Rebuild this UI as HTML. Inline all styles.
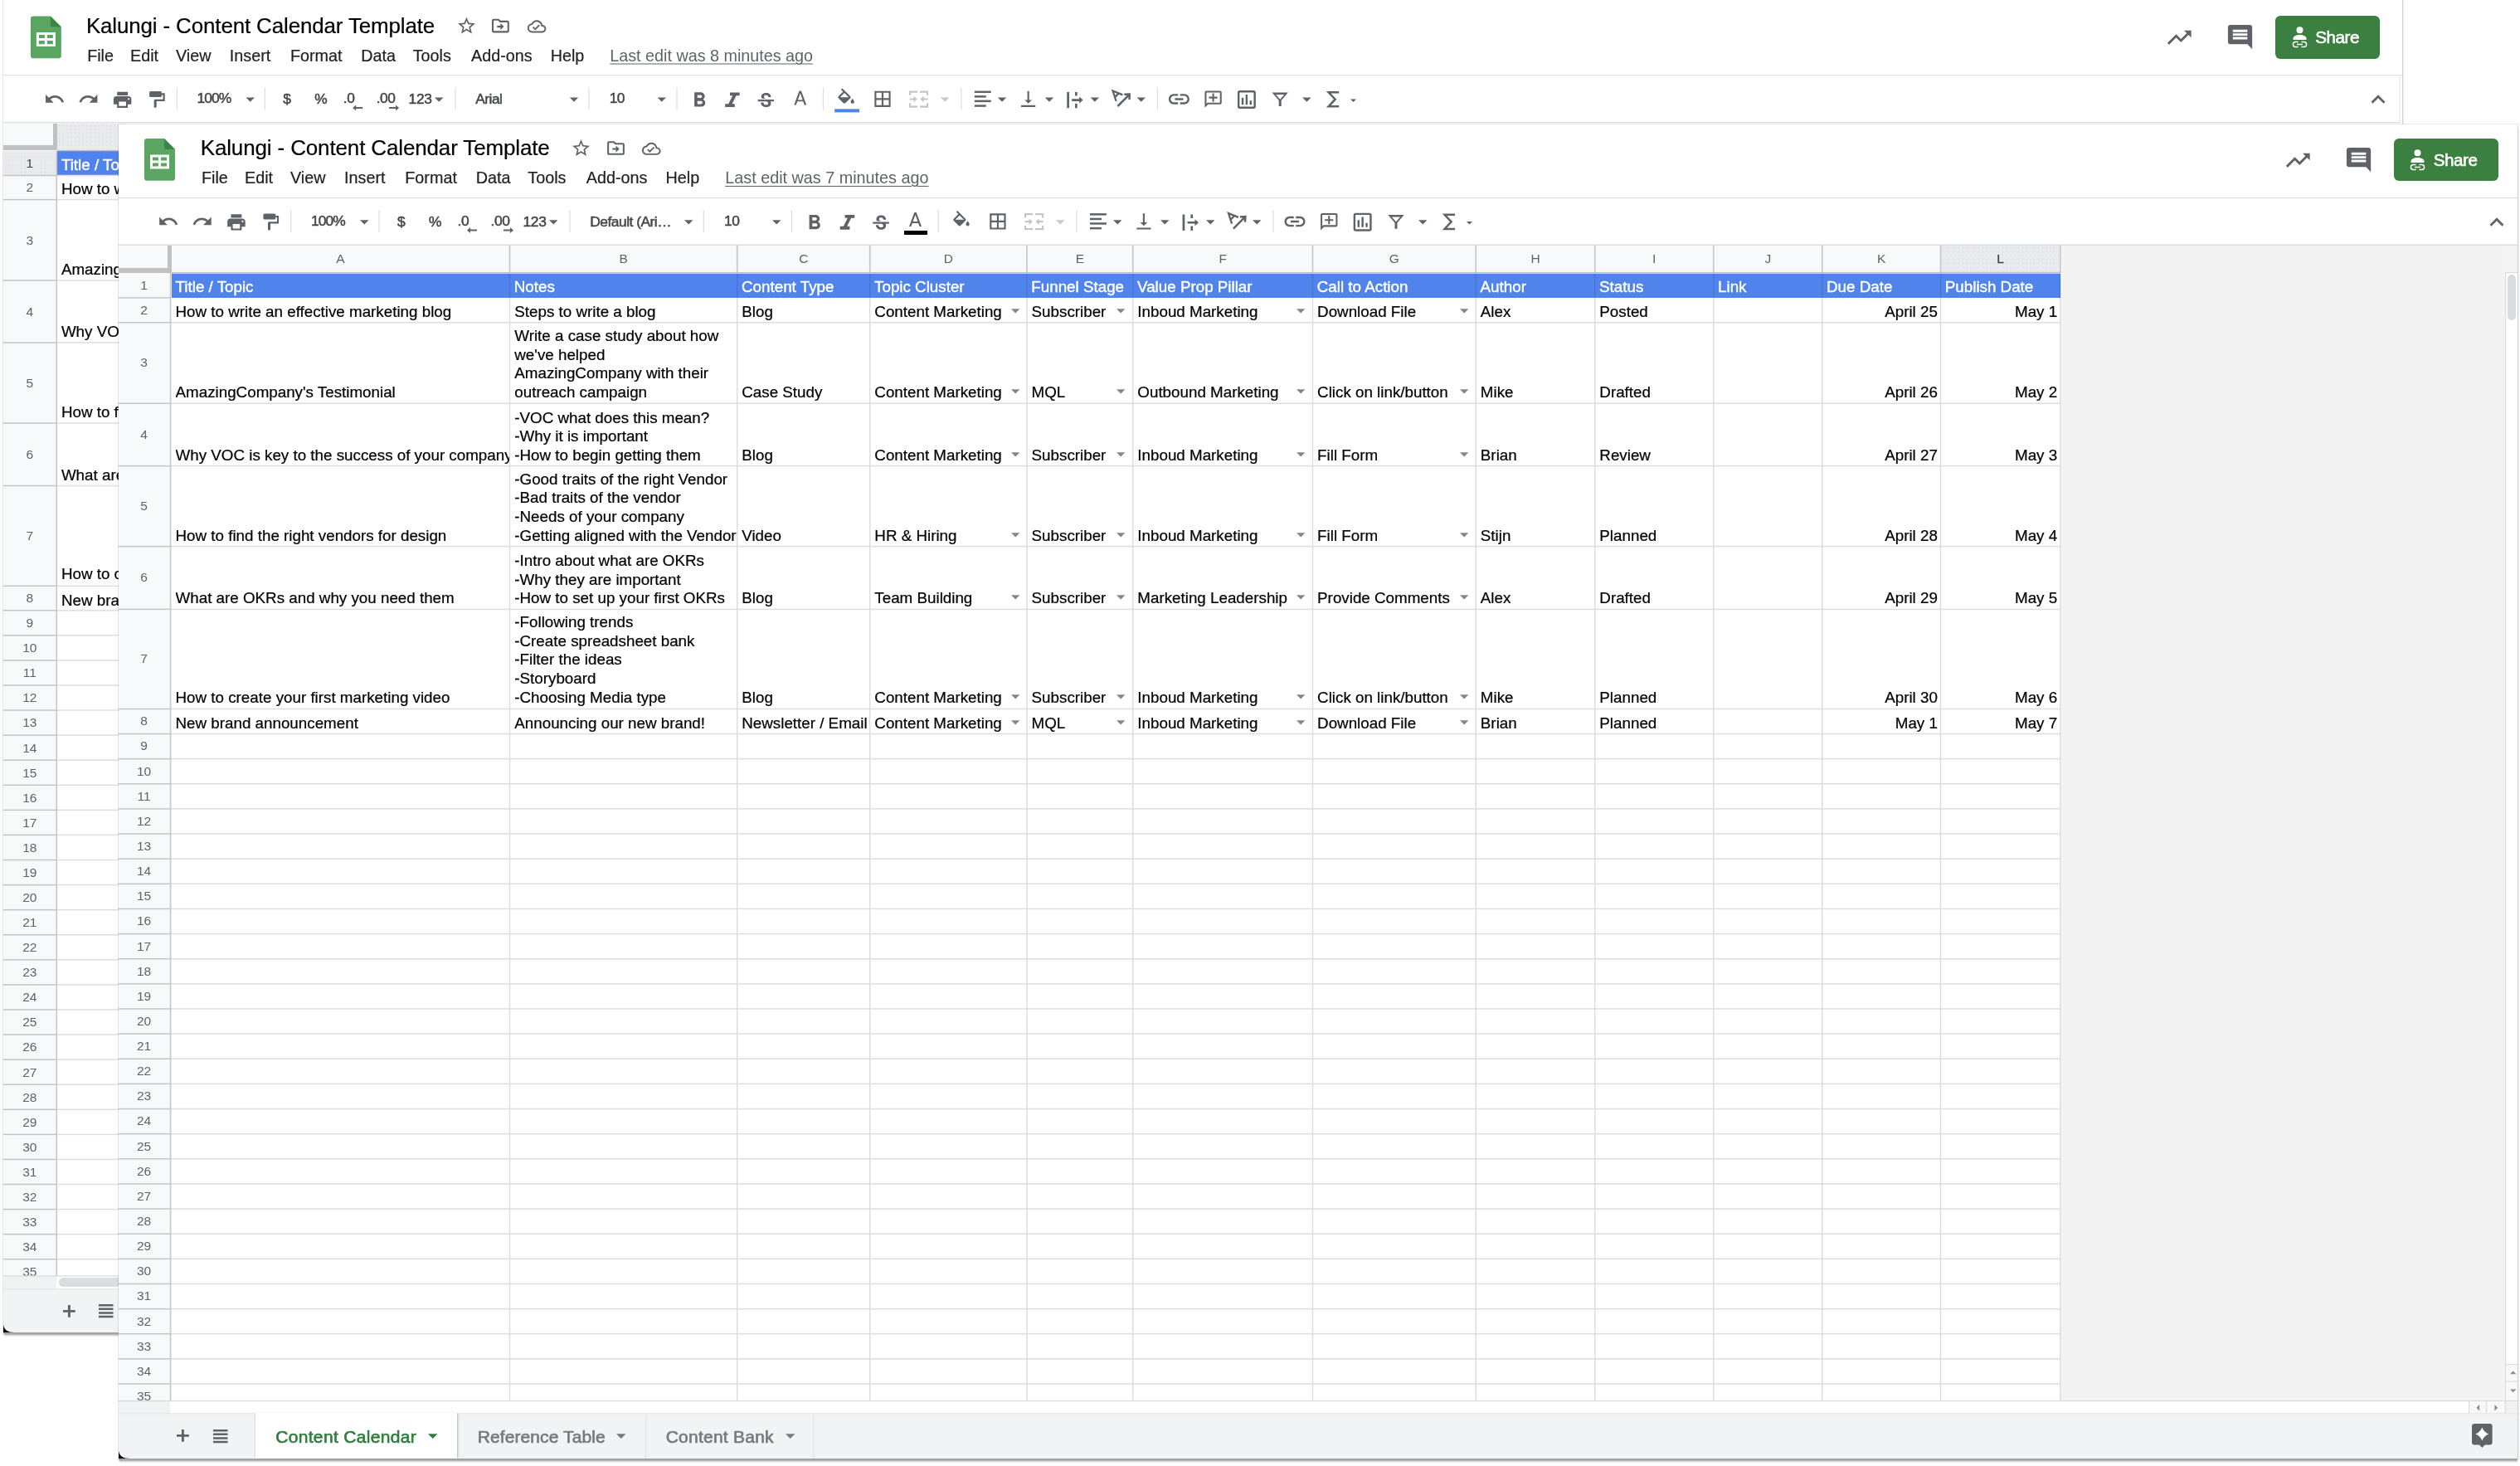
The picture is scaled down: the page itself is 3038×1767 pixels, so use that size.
<!DOCTYPE html>
<html lang="en"><head><meta charset="utf-8"><title>Kalungi - Content Calendar Template - Google Sheets</title>
<style>
html,body{margin:0;padding:0;background:#fff}
body{width:3038px;height:1767px;position:relative;overflow:hidden;font-family:"Liberation Sans",Arial,sans-serif}
#root{position:absolute;left:0;top:0;width:3038px;height:1767px;overflow:hidden;will-change:transform}
.b,.t,.i,.win,.share,.xf{position:absolute}
.xf{left:0;top:0;width:3038px;height:400px;transform-origin:0 0}
.i{display:block;overflow:visible}
.win{background:#fff;box-shadow:0 2.8px 0 -0.3px #a3a3a3, 0 4.5px 2px -0.5px rgba(0,0,0,.22), 0 0 0 0.8px rgba(0,0,0,.09), 1px 1px 3px rgba(0,0,0,.10)}
.t{white-space:pre;line-height:1;color:#000}
.c{text-align:center}
.title{color:#000;-webkit-text-stroke:0.2px #000}
.menu{color:#202124;-webkit-text-stroke:0.2px #202124}
.lastedit{color:#5f6368;text-decoration:underline;text-decoration-thickness:1.4px;text-underline-offset:3px}
.tb{color:#444746;-webkit-text-stroke:0.5px #444746}
.rh{color:#5f6368}
.cell{color:#000;-webkit-text-stroke:0.22px #000}
.wh{color:#fff;-webkit-text-stroke:0.4px #fff}
.share{background:#3c8041;border-radius:6px}
.sharetxt{color:#fff;-webkit-text-stroke:0.6px #fff;letter-spacing:-0.45px}
.tab{color:#777a7d;-webkit-text-stroke:0.65px #777a7d}
.tab.act{color:#2e7d3e;-webkit-text-stroke:0.65px #2e7d3e}
</style></head>
<body>
<div id="root">
<div class="win" style="left:3.75px;top:-10px;width:2892.5px;height:1616.25px"></div>
<div class="xf" style="transform:translate(-136.78px,-147.1px) scale(0.9982)">
<svg class="i" style="left:173.5px;top:166.6px" width="37" height="50.8" viewBox="0 0 37 50.8"><path fill="#5ba563" d="M3.4 0H24L37 13V47.4a3.4 3.4 0 0 1-3.4 3.4H3.4A3.4 3.4 0 0 1 0 47.4V3.4A3.4 3.4 0 0 1 3.4 0z"/><path fill="#3d8546" d="M24 0L37 13H26.4A2.4 2.4 0 0 1 24 10.6z"/><path fill="#fff" fill-rule="evenodd" d="M7 19.5H30V36.5H7zM10 22.4V26.4H17V22.4zM20 22.4V26.4H27V22.4zM10 29.4V33.6H17V29.4zM20 29.4V33.6H27V29.4z"/></svg>
<span class="t title" style="left:241.1px;top:165px;font-size:26px;letter-spacing:-0.14px">Kalungi - Content Calendar Template</span>
<svg class="i" style="left:687.65px;top:166.4px" width="25" height="25" viewBox="0 0 24 24"><path fill="#5f6368" d="M22 9.24l-7.19-.62L12 2 9.19 8.63 2 9.24l5.46 4.73L5.82 21 12 17.27 18.18 21l-1.63-7.03L22 9.24zM12 15.4l-3.76 2.27 1-4.28-3.32-2.88 4.38-.38L12 6.1l1.71 4.04 4.38.38-3.32 2.88 1 4.28L12 15.4z"/></svg>
<svg class="i" style="left:729.4px;top:166.4px" width="25" height="25" viewBox="0 0 24 24"><path fill="#5f6368" d="M20 6h-8l-2-2H4c-1.1 0-2 .9-2 2v12c0 1.1.9 2 2 2h16c1.1 0 2-.9 2-2V8c0-1.1-.9-2-2-2zm0 12H4V6h5.17l2 2H20v10zm-8-1l4-4-4-4v3H8v2h4v3z"/></svg>
<svg class="i" style="left:773.85px;top:167.7px" width="22.6" height="22.6" viewBox="0 0 24 24"><path fill="#5f6368" d="M19.35 10.04C18.67 6.59 15.64 4 12 4 9.11 4 6.6 5.64 5.35 8.04 2.34 8.36 0 10.91 0 14c0 3.31 2.69 6 6 6h13c2.76 0 5-2.24 5-5 0-2.64-2.05-4.78-4.65-4.96zM19 18H6c-2.21 0-4-1.79-4-4 0-2.05 1.53-3.76 3.56-3.97l1.07-.11.5-.95C8.08 7.14 9.94 6 12 6c2.62 0 4.88 1.86 5.39 4.43l.3 1.5 1.53.11c1.56.1 2.78 1.41 2.78 2.96 0 1.65-1.35 3-3 3zm-9-3.82l-2.09-2.09L6.5 13.5 10 17l6.01-6.01-1.41-1.41z"/></svg>
<span class="t menu" style="left:242.4px;top:205px;font-size:19.8px;">File</span>
<span class="t menu" style="left:294.4px;top:205px;font-size:19.8px;">Edit</span>
<span class="t menu" style="left:349.4px;top:205px;font-size:19.8px;">View</span>
<span class="t menu" style="left:414.4px;top:205px;font-size:19.8px;">Insert</span>
<span class="t menu" style="left:487.65px;top:205px;font-size:19.8px;">Format</span>
<span class="t menu" style="left:573.15px;top:205px;font-size:19.8px;">Data</span>
<span class="t menu" style="left:635.65px;top:205px;font-size:19.8px;">Tools</span>
<span class="t menu" style="left:706.15px;top:205px;font-size:19.8px;">Add-ons</span>
<span class="t menu" style="left:801.9px;top:205px;font-size:19.8px;">Help</span>
<span class="t lastedit" style="left:873.65px;top:205px;font-size:19.8px;">Last edit was 8 minutes ago</span>
<svg class="i" style="left:190.08px;top:254.08px" width="25.84" height="25.84" viewBox="0 0 24 24"><path fill="#5f6368" d="M12.5 8c-2.65 0-5.05.99-6.9 2.6L2 7v9h9l-3.62-3.62c1.39-1.16 3.16-1.88 5.12-1.88 3.54 0 6.55 2.31 7.6 5.5l2.37-.78C21.08 11.03 17.15 8 12.5 8z"/></svg>
<svg class="i" style="left:231.08px;top:254.08px" width="25.84" height="25.84" viewBox="0 0 24 24"><path fill="#5f6368" d="M18.4 10.6C16.55 8.99 14.15 8 11.5 8c-4.65 0-8.58 3.03-9.96 7.22L3.9 16c1.05-3.19 4.05-5.5 7.6-5.5 1.95 0 3.73.72 5.12 1.88L13 16h9V7l-3.6 3.6z"/></svg>
<svg class="i" style="left:272.08px;top:255.08px" width="25.84" height="25.84" viewBox="0 0 24 24"><path fill="#5f6368" d="M19 8H5c-1.66 0-3 1.34-3 3v6h4v4h12v-4h4v-6c0-1.66-1.34-3-3-3zm-3 11H8v-5h8v5zm3-7c-.55 0-1-.45-1-1s.45-1 1-1 1 .45 1 1-.45 1-1 1zm-1-9H6v4h12V3z"/></svg>
<svg class="i" style="left:316.5px;top:257px" width="20" height="21" viewBox="0 0 20 21"><rect x="0.4" y="0.5" width="14.9" height="7.1" rx="1.6" fill="#5f6368"/><path d="M15.3 4H18V11.4H7.5V19" fill="none" stroke="#5f6368" stroke-width="2.2"/><rect x="6" y="11.4" width="3" height="9" rx="0.8" fill="#5f6368"/></svg>
<svg class="i" style="left:0;top:0" width="3038" height="1767"><rect x="350.15" y="253" width="1.2" height="27" fill="#dcdee1"/></svg>
<span class="t tb" style="left:375px;top:258px;font-size:17.4px;letter-spacing:-0.9px">100%</span>
<svg class="i" style="left:433.5px;top:264.75px" width="10.5" height="5.5" viewBox="0 0 10 5"><path fill="#5f6368" d="M0 0h10L5 5z"/></svg>
<svg class="i" style="left:0;top:0" width="3038" height="1767"><rect x="456.4" y="253" width="1.2" height="27" fill="#dcdee1"/></svg>
<span class="t c tb" style="left:383.75px;width:200px;top:259px;font-size:17.4px;">$</span>
<span class="t c tb" style="left:424.25px;width:200px;top:259px;font-size:17.4px;letter-spacing:-1px">%</span>
<span class="t tb" style="left:551.5px;top:258px;font-size:17.4px;letter-spacing:-0.4px">.0</span>
<svg class="i" style="left:563px;top:274.4px" width="12" height="7" viewBox="0 0 12 7"><path fill="#5f6368" d="M4 0L0 3.5 4 7V4.5h8v-2H4z"/></svg>
<span class="t tb" style="left:591.5px;top:258px;font-size:17.4px;letter-spacing:-0.4px">.00</span>
<svg class="i" style="left:606.5px;top:274.4px" width="12" height="7" viewBox="0 0 12 7"><path fill="#5f6368" d="M8 0l4 3.5L8 7V4.5H0v-2h8z"/></svg>
<span class="t tb" style="left:630.5px;top:259px;font-size:17.4px;letter-spacing:-0.35px">123</span>
<svg class="i" style="left:662.25px;top:264.75px" width="10.5" height="5.5" viewBox="0 0 10 5"><path fill="#5f6368" d="M0 0h10L5 5z"/></svg>
<svg class="i" style="left:0;top:0" width="3038" height="1767"><rect x="686.4" y="253" width="1.2" height="27" fill="#dcdee1"/></svg>
<span class="t tb" style="left:711.25px;top:259px;font-size:17.4px;letter-spacing:-0.5px">Arial</span>
<svg class="i" style="left:824.75px;top:264.75px" width="10.5" height="5.5" viewBox="0 0 10 5"><path fill="#5f6368" d="M0 0h10L5 5z"/></svg>
<svg class="i" style="left:0;top:0" width="3038" height="1767"><rect x="847.65" y="253" width="1.2" height="27" fill="#dcdee1"/></svg>
<span class="t tb" style="left:873px;top:258px;font-size:17.4px;letter-spacing:-0.5px">10</span>
<svg class="i" style="left:931px;top:264.75px" width="10.5" height="5.5" viewBox="0 0 10 5"><path fill="#5f6368" d="M0 0h10L5 5z"/></svg>
<svg class="i" style="left:0;top:0" width="3038" height="1767"><rect x="953.9" y="253" width="1.2" height="27" fill="#dcdee1"/></svg>
<svg class="i" style="left:966.85px;top:253.95px" width="29.5" height="29.5" viewBox="0 0 24 24"><path fill="#5f6368" d="M15.6 10.79c.97-.67 1.65-1.77 1.65-2.79 0-2.26-1.75-4-4-4H7v14h7.04c2.09 0 3.71-1.7 3.71-3.79 0-1.52-.86-2.82-2.15-3.42zM10 6.5h3c.83 0 1.5.67 1.5 1.5s-.67 1.5-1.5 1.5h-3v-3zm3.5 9H10v-3h3.5c.83 0 1.5.67 1.5 1.5s-.67 1.5-1.5 1.5z"/></svg>
<svg class="i" style="left:1004.48px;top:253.9px" width="35.03" height="30.2" viewBox="0 0 24 24" preserveAspectRatio="none"><path fill="#5f6368" d="M10 4v3h2.21l-3.42 8H6v3h8v-3h-2.21l3.42-8H18V4z"/></svg>
<svg class="i" style="left:1048.98px;top:255.95px" width="26.04" height="27.7" viewBox="0 0 24 24" preserveAspectRatio="none"><path fill="#5f6368" d="M7.24 8.75c-.26-.48-.39-1.03-.39-1.67 0-.61.13-1.16.4-1.67.26-.5.63-.93 1.11-1.29.48-.35 1.05-.63 1.7-.83.66-.19 1.39-.29 2.18-.29.81 0 1.54.11 2.21.34.66.22 1.23.54 1.69.94.47.4.83.88 1.08 1.43.25.55.38 1.15.38 1.81h-3.01c0-.31-.05-.59-.15-.85-.09-.27-.24-.49-.44-.68-.2-.19-.45-.33-.75-.44-.3-.1-.66-.16-1.06-.16-.39 0-.74.04-1.03.13-.29.09-.53.21-.72.36-.19.16-.34.34-.44.55-.1.21-.15.43-.15.66 0 .48.25.88.74 1.21.38.25.77.48 1.41.7H7.39c-.05-.08-.11-.17-.15-.25zM21 12v-2H3v2h9.62c.18.07.4.14.55.2.37.17.66.34.87.51.21.17.35.36.43.57.07.2.11.43.11.69 0 .23-.05.45-.14.66-.09.2-.23.38-.42.53-.19.15-.42.26-.71.35-.29.08-.63.13-1.01.13-.43 0-.83-.04-1.18-.13s-.66-.23-.91-.42c-.25-.19-.45-.44-.59-.75-.14-.31-.25-.76-.25-1.21H6.4c0 .55.08 1.13.24 1.58.16.45.37.85.65 1.21.28.35.6.66.98.92.37.26.78.48 1.22.65.44.17.9.3 1.38.39.48.08.96.13 1.44.13.8 0 1.53-.09 2.18-.28s1.21-.45 1.67-.79c.46-.34.82-.77 1.07-1.27s.38-1.07.38-1.71c0-.6-.1-1.14-.31-1.61-.05-.11-.11-.23-.17-.33H21z"/></svg>
<svg class="i" style="left:1096px;top:256.9px" width="15" height="17" viewBox="0 0 14.25 17.5" preserveAspectRatio="none"><path fill="#5f6368" fill-rule="evenodd" d="M0 17.5L6 0H8.25L14.25 17.5H11.9L10.5 13.3H3.75L2.35 17.5zM4.4 11.3H9.85L7.125 3z"/></svg>
<svg class="i" style="left:0;top:0" width="3038" height="1767"><rect x="1130.65" y="253" width="1.2" height="27" fill="#dcdee1"/></svg>
<svg class="i" style="left:1145.9px;top:253.8px" width="26" height="26" viewBox="0 0 24 24"><path fill="#5f6368" d="M16.56 8.94L7.62 0 6.21 1.41l2.38 2.38-5.15 5.15c-.59.59-.59 1.54 0 2.12l5.5 5.5c.29.29.68.44 1.06.44s.77-.15 1.06-.44l5.5-5.5c.59-.58.59-1.53 0-2.12zM5.21 10L10 5.21 14.79 10H5.21zM19 11.5s-2 2.17-2 3.5c0 1.1.9 2 2 2s2-.9 2-2c0-1.33-2-3.5-2-3.5z"/></svg>
<div class="b" style="left:1144.5px;top:278.75px;width:30px;height:4.5px;background:#4a86e8;"></div>
<svg class="i" style="left:1189.83px;top:254.08px" width="25.84" height="25.84" viewBox="0 0 24 24"><path fill="#5f6368" d="M3 3v18h18V3H3zm8 16H5v-6h6v6zm0-8H5V5h6v6zm8 8h-6v-6h6v6zm0-8h-6V5h6v6z"/></svg>
<svg class="i" style="left:1234.5px;top:257.1px" width="23.2" height="20.3" viewBox="0 0 23.2 20.3"><g fill="#c3c5c8"><path d="M0 0H10.1V2.3H2.1V5.4H0zM23.2 0H13.1V2.3H21.1V5.4H23.2zM0 20.3H10.1V18H2.1V14.9H0zM23.2 20.3H13.1V18H21.1V14.9H23.2z"/><path d="M0.6 9.1H5.6V6.4L9.8 10.15L5.6 13.9V11.2H0.6zM22.6 9.1H17.6V6.4L13.4 10.15L17.6 13.9V11.2H22.6z"/></g></svg>
<svg class="i" style="left:1273px;top:264.75px" width="10.5" height="5.5" viewBox="0 0 10 5"><path fill="#c6c8ca" d="M0 0h10L5 5z"/></svg>
<svg class="i" style="left:0;top:0" width="3038" height="1767"><rect x="1297.4" y="253" width="1.2" height="27" fill="#dcdee1"/></svg>
<svg class="i" style="left:1314px;top:257px" width="20" height="20" viewBox="0 0 20 20"><g fill="#5f6368"><rect x="0" y="0.1" width="19.9" height="2.5"/><rect x="0" y="5.7" width="13.9" height="2.5"/><rect x="0" y="11.2" width="19.9" height="2.5"/><rect x="0" y="16.9" width="13.9" height="2.5"/></g></svg>
<svg class="i" style="left:1341.5px;top:264.75px" width="10.5" height="5.5" viewBox="0 0 10 5"><path fill="#5f6368" d="M0 0h10L5 5z"/></svg>
<svg class="i" style="left:1366.08px;top:254.08px" width="25.84" height="25.84" viewBox="0 0 24 24"><path fill="#5f6368" d="M16 13h-3V3h-2v10H8l4 4 4-4zM4 19v2h16v-2H4z"/></svg>
<svg class="i" style="left:1398.5px;top:264.75px" width="10.5" height="5.5" viewBox="0 0 10 5"><path fill="#5f6368" d="M0 0h10L5 5z"/></svg>
<svg class="i" style="left:1425px;top:257.5px" width="21" height="21" viewBox="0 0 21 21"><g fill="#5f6368"><rect x="0.6" y="0.5" width="2.7" height="19.4"/><rect x="10.4" y="0.5" width="2.7" height="4.5"/><rect x="10.4" y="14.5" width="2.7" height="5.4"/><path d="M6.5 8.9H15.5V6.2L20 10.2L15.5 14.3V11.5H6.5z"/></g></svg>
<svg class="i" style="left:1454px;top:264.75px" width="10.5" height="5.5" viewBox="0 0 10 5"><path fill="#5f6368" d="M0 0h10L5 5z"/></svg>
<svg class="i" style="left:1479px;top:255px" width="25" height="24" viewBox="0 0 25 24"><g fill="none" stroke="#5f6368" stroke-width="2.3" stroke-linejoin="miter"><path d="M6.1 14.6L2 2.1L13.9 6.9M4.5 9.7L9.2 5"/><path d="M7.9 20.6L21.6 6.9M15.8 6.4L22.3 6.1L22 12.6" stroke-width="2.5"/></g></svg>
<svg class="i" style="left:1509.75px;top:264.75px" width="10.5" height="5.5" viewBox="0 0 10 5"><path fill="#5f6368" d="M0 0h10L5 5z"/></svg>
<svg class="i" style="left:0;top:0" width="3038" height="1767"><rect x="1534.4" y="253" width="1.2" height="27" fill="#dcdee1"/></svg>
<svg class="i" style="left:1546.25px;top:252.2px" width="30" height="30" viewBox="0 0 24 24"><path fill="#5f6368" d="M3.9 12c0-1.71 1.39-3.1 3.1-3.1h4V7H7c-2.76 0-5 2.24-5 5s2.24 5 5 5h4v-1.9H7c-1.71 0-3.1-1.39-3.1-3.1zM8 13h8v-2H8v2zm9-6h-4v1.9h4c1.71 0 3.1 1.39 3.1 3.1s-1.39 3.1-3.1 3.1h-4V17h4c2.76 0 5-2.24 5-5s-2.24-5-5-5z"/></svg>
<svg class="i" style="left:1589.5px;top:255.45px" width="24.5" height="24.5" viewBox="0 0 24 24"><path fill="#5f6368" d="M20 2H4c-1.1 0-2 .9-2 2v18l4-4h14c1.1 0 2-.9 2-2V4c0-1.1-.9-2-2-2zm0 14H5.17L4 17.17V4h16v12zM11 5h2v4h4v2h-4v4h-2v-4H7V9h4z"/></svg>
<svg class="i" style="left:1627.6px;top:252.85px" width="29.3" height="29.3" viewBox="0 0 24 24"><path fill="#5f6368" d="M9 17H7v-7h2v7zm4 0h-2V7h2v10zm4 0h-2v-4h2v4zm2 2H5V5h14v14zm0-16H5c-1.1 0-2 .9-2 2v14c0 1.1.9 2 2 2h14c1.1 0 2-.9 2-2V5c0-1.1-.9-2-2-2z"/></svg>
<svg class="i" style="left:1673.4px;top:258.9px" width="20" height="17" viewBox="0 0 20 17"><path fill="#5f6368" fill-rule="evenodd" d="M0.3 0H19.7L11.5 9.6V16.7H8.5V9.6zM4.9 2.5H15.1L10 8.3z"/></svg>
<svg class="i" style="left:1709.75px;top:264.75px" width="10.5" height="5.5" viewBox="0 0 10 5"><path fill="#5f6368" d="M0 0h10L5 5z"/></svg>
<svg class="i" style="left:1739.3px;top:256.6px" width="16" height="21" viewBox="0 0 16 21"><path d="M15.1 1.8H2.6L10.6 10.3L2.6 18.9H15.1" fill="none" stroke="#5f6368" stroke-width="2.5" stroke-linejoin="miter"/></svg>
<svg class="i" style="left:1768.25px;top:267.2px" width="7" height="3.6" viewBox="0 0 10 5"><path fill="#5f6368" d="M0 0h10L5 5z"/></svg>
</div>
<svg class="i" style="left:0;top:0" width="3038" height="1767"><rect x="3.75" y="90.15" width="2892.5" height="1.2" fill="#dcdee1"/></svg>
<svg class="i" style="left:2610.35px;top:27.8px" width="34.5" height="34.5" viewBox="0 0 24 24"><path fill="#5f6368" d="M16 6l2.29 2.29-4.88 4.88-4-4L2 16.59 3.41 18l6-6 4 4 6.3-6.29L22 12V6z"/></svg>
<svg class="i" style="left:2683.35px;top:27.45px" width="35.1" height="35.1" viewBox="0 0 24 24"><path fill="#5f6368" d="M21.99 4c0-1.1-.89-2-1.99-2H4c-1.1 0-2 .9-2 2v12c0 1.1.9 2 2 2h14l4 4-.01-18zM18 14H6v-2h12v2zm0-3H6V9h12v2zm0-3H6V6h12v2z"/></svg>
<div class="share" style="left:2743.25px;top:19.25px;width:126px;height:51.4px"></div>
<svg class="i" style="left:2761.95px;top:32.25px" width="21" height="26" viewBox="0 0 21 26"><circle cx="10.5" cy="4.2" r="4" fill="#fff"/><path fill="#fff" d="M10.5 10c-4 0-8 1.6-8 4.4V16h16v-1.6c0-2.8-4-4.4-8-4.4z"/><g fill="none" stroke="#fff" stroke-width="1.5"><path d="M8.6 18.4H5.4a3 3 0 0 0 0 6h3.2M12.4 18.4h3.2a3 3 0 0 1 0 6h-3.2M7 21.4h7"/></g></svg>
<span class="t sharetxt" style="left:2791.25px;top:35px;font-size:20.6px;">Share</span>
<svg class="i" style="left:2850px;top:103.3px" width="34" height="34" viewBox="0 0 24 24"><path fill="#5f6368" d="M12 8l-6 6 1.41 1.41L12 10.83l4.59 4.58L18 14z"/></svg>
<svg class="i" style="left:0;top:0" width="3038" height="1767"><rect x="3.75" y="147.1" width="2889.5" height="1.3" fill="#d9dbde"/><rect x="2892.45" y="92" width="1.2" height="56" fill="#e4e5e7"/></svg>
<div class="b" style="left:3.75px;top:148.5px;width:65.25px;height:1389.5px;background:#f8f9fa;"></div>
<div class="b" style="left:69px;top:148.5px;width:81px;height:33px;background:#eaebed;background-image:radial-gradient(rgba(110,150,240,.33) 0.5px,transparent 0.8px);background-size:4.8px 4.8px"></div>
<div class="b" style="left:3.75px;top:175px;width:65.25px;height:6.25px;background:#c1c1c1;"></div>
<div class="b" style="left:64.4px;top:148.5px;width:4.5px;height:32.75px;background:#c1c1c1;"></div>
<div class="b" style="left:3.75px;top:182px;width:64.25px;height:29.5px;background:#eaebed;background-image:radial-gradient(rgba(110,150,240,.33) 0.5px,transparent 0.8px);background-size:4.8px 4.8px"></div>
<div class="b" style="left:69px;top:182.25px;width:81px;height:29.25px;background:#5183ec;"></div>
<svg class="i" style="left:0;top:0" width="3038" height="1767"><rect x="69" y="181" width="81" height="1.2" fill="#bdbfc3"/><rect x="3.75" y="210.78" width="64.25" height="1.45" fill="#c2c4c7"/><rect x="69" y="210.75" width="81" height="1.5" fill="#dedede"/></svg>
<span class="t c rh" style="left:3.75px;width:64px;top:189px;font-size:15.5px;color:#3c4043;">1</span>
<svg class="i" style="left:0;top:0" width="3038" height="1767"><rect x="3.75" y="239.88" width="64.25" height="1.45" fill="#c2c4c7"/><rect x="69" y="239.85" width="81" height="1.5" fill="#dedede"/></svg>
<span class="t c rh" style="left:3.75px;width:64px;top:218px;font-size:15.5px;">2</span>
<svg class="i" style="left:0;top:0" width="3038" height="1767"><rect x="3.75" y="337.27" width="64.25" height="1.45" fill="#c2c4c7"/><rect x="69" y="337.25" width="81" height="1.5" fill="#dedede"/></svg>
<span class="t c rh" style="left:3.75px;width:64px;top:282px;font-size:15.5px;">3</span>
<svg class="i" style="left:0;top:0" width="3038" height="1767"><rect x="3.75" y="412.27" width="64.25" height="1.45" fill="#c2c4c7"/><rect x="69" y="412.25" width="81" height="1.5" fill="#dedede"/></svg>
<span class="t c rh" style="left:3.75px;width:64px;top:368px;font-size:15.5px;">4</span>
<svg class="i" style="left:0;top:0" width="3038" height="1767"><rect x="3.75" y="509.27" width="64.25" height="1.45" fill="#c2c4c7"/><rect x="69" y="509.25" width="81" height="1.5" fill="#dedede"/></svg>
<span class="t c rh" style="left:3.75px;width:64px;top:454px;font-size:15.5px;">5</span>
<svg class="i" style="left:0;top:0" width="3038" height="1767"><rect x="3.75" y="584.77" width="64.25" height="1.45" fill="#c2c4c7"/><rect x="69" y="584.75" width="81" height="1.5" fill="#dedede"/></svg>
<span class="t c rh" style="left:3.75px;width:64px;top:540px;font-size:15.5px;">6</span>
<svg class="i" style="left:0;top:0" width="3038" height="1767"><rect x="3.75" y="705.52" width="64.25" height="1.45" fill="#c2c4c7"/><rect x="69" y="705.5" width="81" height="1.5" fill="#dedede"/></svg>
<span class="t c rh" style="left:3.75px;width:64px;top:638px;font-size:15.5px;">7</span>
<svg class="i" style="left:0;top:0" width="3038" height="1767"><rect x="3.75" y="735.02" width="64.25" height="1.45" fill="#c2c4c7"/><rect x="69" y="735" width="81" height="1.5" fill="#dedede"/></svg>
<span class="t c rh" style="left:3.75px;width:64px;top:713px;font-size:15.5px;">8</span>
<svg class="i" style="left:0;top:0" width="3038" height="1767"><rect x="3.75" y="765.1" width="64.25" height="1.45" fill="#c2c4c7"/><rect x="69" y="765.08" width="81" height="1.5" fill="#dedede"/></svg>
<span class="t c rh" style="left:3.75px;width:64px;top:743px;font-size:15.5px;">9</span>
<svg class="i" style="left:0;top:0" width="3038" height="1767"><rect x="3.75" y="795.18" width="64.25" height="1.45" fill="#c2c4c7"/><rect x="69" y="795.15" width="81" height="1.5" fill="#dedede"/></svg>
<span class="t c rh" style="left:3.75px;width:64px;top:773px;font-size:15.5px;">10</span>
<svg class="i" style="left:0;top:0" width="3038" height="1767"><rect x="3.75" y="825.26" width="64.25" height="1.45" fill="#c2c4c7"/><rect x="69" y="825.23" width="81" height="1.5" fill="#dedede"/></svg>
<span class="t c rh" style="left:3.75px;width:64px;top:803px;font-size:15.5px;">11</span>
<svg class="i" style="left:0;top:0" width="3038" height="1767"><rect x="3.75" y="855.33" width="64.25" height="1.45" fill="#c2c4c7"/><rect x="69" y="855.31" width="81" height="1.5" fill="#dedede"/></svg>
<span class="t c rh" style="left:3.75px;width:64px;top:833px;font-size:15.5px;">12</span>
<svg class="i" style="left:0;top:0" width="3038" height="1767"><rect x="3.75" y="885.41" width="64.25" height="1.45" fill="#c2c4c7"/><rect x="69" y="885.38" width="81" height="1.5" fill="#dedede"/></svg>
<span class="t c rh" style="left:3.75px;width:64px;top:863px;font-size:15.5px;">13</span>
<svg class="i" style="left:0;top:0" width="3038" height="1767"><rect x="3.75" y="915.49" width="64.25" height="1.45" fill="#c2c4c7"/><rect x="69" y="915.46" width="81" height="1.5" fill="#dedede"/></svg>
<span class="t c rh" style="left:3.75px;width:64px;top:894px;font-size:15.5px;">14</span>
<svg class="i" style="left:0;top:0" width="3038" height="1767"><rect x="3.75" y="945.56" width="64.25" height="1.45" fill="#c2c4c7"/><rect x="69" y="945.54" width="81" height="1.5" fill="#dedede"/></svg>
<span class="t c rh" style="left:3.75px;width:64px;top:924px;font-size:15.5px;">15</span>
<svg class="i" style="left:0;top:0" width="3038" height="1767"><rect x="3.75" y="975.64" width="64.25" height="1.45" fill="#c2c4c7"/><rect x="69" y="975.62" width="81" height="1.5" fill="#dedede"/></svg>
<span class="t c rh" style="left:3.75px;width:64px;top:954px;font-size:15.5px;">16</span>
<svg class="i" style="left:0;top:0" width="3038" height="1767"><rect x="3.75" y="1005.72" width="64.25" height="1.45" fill="#c2c4c7"/><rect x="69" y="1005.69" width="81" height="1.5" fill="#dedede"/></svg>
<span class="t c rh" style="left:3.75px;width:64px;top:984px;font-size:15.5px;">17</span>
<svg class="i" style="left:0;top:0" width="3038" height="1767"><rect x="3.75" y="1035.8" width="64.25" height="1.45" fill="#c2c4c7"/><rect x="69" y="1035.77" width="81" height="1.5" fill="#dedede"/></svg>
<span class="t c rh" style="left:3.75px;width:64px;top:1014px;font-size:15.5px;">18</span>
<svg class="i" style="left:0;top:0" width="3038" height="1767"><rect x="3.75" y="1065.87" width="64.25" height="1.45" fill="#c2c4c7"/><rect x="69" y="1065.85" width="81" height="1.5" fill="#dedede"/></svg>
<span class="t c rh" style="left:3.75px;width:64px;top:1044px;font-size:15.5px;">19</span>
<svg class="i" style="left:0;top:0" width="3038" height="1767"><rect x="3.75" y="1095.95" width="64.25" height="1.45" fill="#c2c4c7"/><rect x="69" y="1095.92" width="81" height="1.5" fill="#dedede"/></svg>
<span class="t c rh" style="left:3.75px;width:64px;top:1074px;font-size:15.5px;">20</span>
<svg class="i" style="left:0;top:0" width="3038" height="1767"><rect x="3.75" y="1126.03" width="64.25" height="1.45" fill="#c2c4c7"/><rect x="69" y="1126" width="81" height="1.5" fill="#dedede"/></svg>
<span class="t c rh" style="left:3.75px;width:64px;top:1104px;font-size:15.5px;">21</span>
<svg class="i" style="left:0;top:0" width="3038" height="1767"><rect x="3.75" y="1156.1" width="64.25" height="1.45" fill="#c2c4c7"/><rect x="69" y="1156.08" width="81" height="1.5" fill="#dedede"/></svg>
<span class="t c rh" style="left:3.75px;width:64px;top:1134px;font-size:15.5px;">22</span>
<svg class="i" style="left:0;top:0" width="3038" height="1767"><rect x="3.75" y="1186.18" width="64.25" height="1.45" fill="#c2c4c7"/><rect x="69" y="1186.15" width="81" height="1.5" fill="#dedede"/></svg>
<span class="t c rh" style="left:3.75px;width:64px;top:1164px;font-size:15.5px;">23</span>
<svg class="i" style="left:0;top:0" width="3038" height="1767"><rect x="3.75" y="1216.26" width="64.25" height="1.45" fill="#c2c4c7"/><rect x="69" y="1216.23" width="81" height="1.5" fill="#dedede"/></svg>
<span class="t c rh" style="left:3.75px;width:64px;top:1194px;font-size:15.5px;">24</span>
<svg class="i" style="left:0;top:0" width="3038" height="1767"><rect x="3.75" y="1246.33" width="64.25" height="1.45" fill="#c2c4c7"/><rect x="69" y="1246.31" width="81" height="1.5" fill="#dedede"/></svg>
<span class="t c rh" style="left:3.75px;width:64px;top:1224px;font-size:15.5px;">25</span>
<svg class="i" style="left:0;top:0" width="3038" height="1767"><rect x="3.75" y="1276.41" width="64.25" height="1.45" fill="#c2c4c7"/><rect x="69" y="1276.39" width="81" height="1.5" fill="#dedede"/></svg>
<span class="t c rh" style="left:3.75px;width:64px;top:1254px;font-size:15.5px;">26</span>
<svg class="i" style="left:0;top:0" width="3038" height="1767"><rect x="3.75" y="1306.49" width="64.25" height="1.45" fill="#c2c4c7"/><rect x="69" y="1306.46" width="81" height="1.5" fill="#dedede"/></svg>
<span class="t c rh" style="left:3.75px;width:64px;top:1285px;font-size:15.5px;">27</span>
<svg class="i" style="left:0;top:0" width="3038" height="1767"><rect x="3.75" y="1336.57" width="64.25" height="1.45" fill="#c2c4c7"/><rect x="69" y="1336.54" width="81" height="1.5" fill="#dedede"/></svg>
<span class="t c rh" style="left:3.75px;width:64px;top:1315px;font-size:15.5px;">28</span>
<svg class="i" style="left:0;top:0" width="3038" height="1767"><rect x="3.75" y="1366.64" width="64.25" height="1.45" fill="#c2c4c7"/><rect x="69" y="1366.62" width="81" height="1.5" fill="#dedede"/></svg>
<span class="t c rh" style="left:3.75px;width:64px;top:1345px;font-size:15.5px;">29</span>
<svg class="i" style="left:0;top:0" width="3038" height="1767"><rect x="3.75" y="1396.72" width="64.25" height="1.45" fill="#c2c4c7"/><rect x="69" y="1396.69" width="81" height="1.5" fill="#dedede"/></svg>
<span class="t c rh" style="left:3.75px;width:64px;top:1375px;font-size:15.5px;">30</span>
<svg class="i" style="left:0;top:0" width="3038" height="1767"><rect x="3.75" y="1426.8" width="64.25" height="1.45" fill="#c2c4c7"/><rect x="69" y="1426.77" width="81" height="1.5" fill="#dedede"/></svg>
<span class="t c rh" style="left:3.75px;width:64px;top:1405px;font-size:15.5px;">31</span>
<svg class="i" style="left:0;top:0" width="3038" height="1767"><rect x="3.75" y="1456.87" width="64.25" height="1.45" fill="#c2c4c7"/><rect x="69" y="1456.85" width="81" height="1.5" fill="#dedede"/></svg>
<span class="t c rh" style="left:3.75px;width:64px;top:1435px;font-size:15.5px;">32</span>
<svg class="i" style="left:0;top:0" width="3038" height="1767"><rect x="3.75" y="1486.95" width="64.25" height="1.45" fill="#c2c4c7"/><rect x="69" y="1486.93" width="81" height="1.5" fill="#dedede"/></svg>
<span class="t c rh" style="left:3.75px;width:64px;top:1465px;font-size:15.5px;">33</span>
<svg class="i" style="left:0;top:0" width="3038" height="1767"><rect x="3.75" y="1517.03" width="64.25" height="1.45" fill="#c2c4c7"/><rect x="69" y="1517" width="81" height="1.5" fill="#dedede"/></svg>
<span class="t c rh" style="left:3.75px;width:64px;top:1495px;font-size:15.5px;">34</span>
<span class="t c rh" style="left:3.75px;width:64px;top:1525px;font-size:15.5px;">35</span>
<svg class="i" style="left:0;top:0" width="3038" height="1767"><rect x="67.5" y="182" width="1.6" height="1371.5" fill="#c4c6c9"/></svg>
<span class="t cell wh" style="left:73.9px;top:190px;font-size:18.8px;">Title / Topic</span>
<span class="t cell" style="left:73.9px;top:219px;font-size:18.8px;">How to write an effective marketing blog</span>
<span class="t cell" style="left:73.9px;top:316px;font-size:18.8px;">AmazingCompany's Testimonial</span>
<span class="t cell" style="left:73.9px;top:391px;font-size:18.8px;">Why VOC is key to the success of your company</span>
<span class="t cell" style="left:73.9px;top:488px;font-size:18.8px;">How to find the right vendors for design</span>
<span class="t cell" style="left:73.9px;top:564px;font-size:18.8px;">What are OKRs and why you need them</span>
<span class="t cell" style="left:73.9px;top:683px;font-size:18.8px;">How to create your first marketing video</span>
<span class="t cell" style="left:73.9px;top:715px;font-size:18.8px;">New brand announcement</span>
<div class="b" style="left:3.75px;top:1538px;width:146.25px;height:15.75px;background:#fff;"></div>
<div class="b" style="left:3.75px;top:1538px;width:64.25px;height:15.75px;background:#f1f2f3;"></div>
<svg class="i" style="left:0;top:0" width="3038" height="1767"><rect x="3.75" y="1537.4" width="146.25" height="1.2" fill="#d9d9d9"/></svg>
<div class="b" style="left:71.25px;top:1539.75px;width:200px;height:11.5px;background:#dadce0;border-radius:6px"></div>
<div class="b" style="left:3.75px;top:1553.75px;width:146.25px;height:52.5px;background:#f1f3f4;"></div>
<svg class="i" style="left:0;top:0" width="3038" height="1767"><rect x="3.75" y="1553.15" width="146.25" height="1.2" fill="#e3e4e6"/></svg>
<svg class="i" style="left:76.35px;top:1572.6px" width="14.8" height="14.8" viewBox="0 0 14.8 14.8"><path fill="#5f6368" d="M5.95 0H8.85V5.95H14.8V8.85H8.85V14.8H5.95V8.85H0V5.95H5.95z"/></svg>
<svg class="i" style="left:119.25px;top:1572.4px" width="17.5" height="16.4" viewBox="0 0 17.5 16.4"><path fill="#5f6368" d="M0 0H17.5V2.5H0zM0 4.6H17.5V7.1H0zM0 9.2H17.5V11.7H0zM0 13.8H17.5V16.3H0z"/></svg>
<svg class="i" style="left:3.75px;top:1596.25px" width="13.5" height="10" viewBox="0 0 13.5 10"><path d="M0 0Q0.5 10 13.5 10H0z" fill="#000"/></svg>
<div class="win" style="left:142.5px;top:149.5px;width:2892.5px;height:1608.5px"></div>
<svg class="i" style="left:174.1px;top:166.6px" width="37" height="50.8" viewBox="0 0 37 50.8"><path fill="#5ba563" d="M3.4 0H24L37 13V47.4a3.4 3.4 0 0 1-3.4 3.4H3.4A3.4 3.4 0 0 1 0 47.4V3.4A3.4 3.4 0 0 1 3.4 0z"/><path fill="#3d8546" d="M24 0L37 13H26.4A2.4 2.4 0 0 1 24 10.6z"/><path fill="#fff" fill-rule="evenodd" d="M7 19.5H30V36.5H7zM10 22.4V26.4H17V22.4zM20 22.4V26.4H27V22.4zM10 29.4V33.6H17V29.4zM20 29.4V33.6H27V29.4z"/></svg>
<span class="t title" style="left:241.7px;top:165px;font-size:26px;letter-spacing:-0.14px">Kalungi - Content Calendar Template</span>
<svg class="i" style="left:688.25px;top:166.4px" width="25" height="25" viewBox="0 0 24 24"><path fill="#5f6368" d="M22 9.24l-7.19-.62L12 2 9.19 8.63 2 9.24l5.46 4.73L5.82 21 12 17.27 18.18 21l-1.63-7.03L22 9.24zM12 15.4l-3.76 2.27 1-4.28-3.32-2.88 4.38-.38L12 6.1l1.71 4.04 4.38.38-3.32 2.88 1 4.28L12 15.4z"/></svg>
<svg class="i" style="left:730px;top:166.4px" width="25" height="25" viewBox="0 0 24 24"><path fill="#5f6368" d="M20 6h-8l-2-2H4c-1.1 0-2 .9-2 2v12c0 1.1.9 2 2 2h16c1.1 0 2-.9 2-2V8c0-1.1-.9-2-2-2zm0 12H4V6h5.17l2 2H20v10zm-8-1l4-4-4-4v3H8v2h4v3z"/></svg>
<svg class="i" style="left:774.45px;top:167.7px" width="22.6" height="22.6" viewBox="0 0 24 24"><path fill="#5f6368" d="M19.35 10.04C18.67 6.59 15.64 4 12 4 9.11 4 6.6 5.64 5.35 8.04 2.34 8.36 0 10.91 0 14c0 3.31 2.69 6 6 6h13c2.76 0 5-2.24 5-5 0-2.64-2.05-4.78-4.65-4.96zM19 18H6c-2.21 0-4-1.79-4-4 0-2.05 1.53-3.76 3.56-3.97l1.07-.11.5-.95C8.08 7.14 9.94 6 12 6c2.62 0 4.88 1.86 5.39 4.43l.3 1.5 1.53.11c1.56.1 2.78 1.41 2.78 2.96 0 1.65-1.35 3-3 3zm-9-3.82l-2.09-2.09L6.5 13.5 10 17l6.01-6.01-1.41-1.41z"/></svg>
<span class="t menu" style="left:243px;top:205px;font-size:19.8px;">File</span>
<span class="t menu" style="left:295px;top:205px;font-size:19.8px;">Edit</span>
<span class="t menu" style="left:350px;top:205px;font-size:19.8px;">View</span>
<span class="t menu" style="left:415px;top:205px;font-size:19.8px;">Insert</span>
<span class="t menu" style="left:488.25px;top:205px;font-size:19.8px;">Format</span>
<span class="t menu" style="left:573.75px;top:205px;font-size:19.8px;">Data</span>
<span class="t menu" style="left:636.25px;top:205px;font-size:19.8px;">Tools</span>
<span class="t menu" style="left:706.75px;top:205px;font-size:19.8px;">Add-ons</span>
<span class="t menu" style="left:802.5px;top:205px;font-size:19.8px;">Help</span>
<span class="t lastedit" style="left:874.25px;top:205px;font-size:19.8px;">Last edit was 7 minutes ago</span>
<svg class="i" style="left:0;top:0" width="3038" height="1767"><rect x="142.5" y="238" width="2892.5" height="1.2" fill="#dcdee1"/></svg>
<svg class="i" style="left:190.08px;top:254.08px" width="25.84" height="25.84" viewBox="0 0 24 24"><path fill="#5f6368" d="M12.5 8c-2.65 0-5.05.99-6.9 2.6L2 7v9h9l-3.62-3.62c1.39-1.16 3.16-1.88 5.12-1.88 3.54 0 6.55 2.31 7.6 5.5l2.37-.78C21.08 11.03 17.15 8 12.5 8z"/></svg>
<svg class="i" style="left:231.08px;top:254.08px" width="25.84" height="25.84" viewBox="0 0 24 24"><path fill="#5f6368" d="M18.4 10.6C16.55 8.99 14.15 8 11.5 8c-4.65 0-8.58 3.03-9.96 7.22L3.9 16c1.05-3.19 4.05-5.5 7.6-5.5 1.95 0 3.73.72 5.12 1.88L13 16h9V7l-3.6 3.6z"/></svg>
<svg class="i" style="left:272.08px;top:255.08px" width="25.84" height="25.84" viewBox="0 0 24 24"><path fill="#5f6368" d="M19 8H5c-1.66 0-3 1.34-3 3v6h4v4h12v-4h4v-6c0-1.66-1.34-3-3-3zm-3 11H8v-5h8v5zm3-7c-.55 0-1-.45-1-1s.45-1 1-1 1 .45 1 1-.45 1-1 1zm-1-9H6v4h12V3z"/></svg>
<svg class="i" style="left:316.5px;top:257px" width="20" height="21" viewBox="0 0 20 21"><rect x="0.4" y="0.5" width="14.9" height="7.1" rx="1.6" fill="#5f6368"/><path d="M15.3 4H18V11.4H7.5V19" fill="none" stroke="#5f6368" stroke-width="2.2"/><rect x="6" y="11.4" width="3" height="9" rx="0.8" fill="#5f6368"/></svg>
<svg class="i" style="left:0;top:0" width="3038" height="1767"><rect x="350.15" y="253" width="1.2" height="27" fill="#dcdee1"/></svg>
<span class="t tb" style="left:375px;top:258px;font-size:17.4px;letter-spacing:-0.9px">100%</span>
<svg class="i" style="left:433.5px;top:264.75px" width="10.5" height="5.5" viewBox="0 0 10 5"><path fill="#5f6368" d="M0 0h10L5 5z"/></svg>
<svg class="i" style="left:0;top:0" width="3038" height="1767"><rect x="456.4" y="253" width="1.2" height="27" fill="#dcdee1"/></svg>
<span class="t c tb" style="left:383.75px;width:200px;top:259px;font-size:17.4px;">$</span>
<span class="t c tb" style="left:424.25px;width:200px;top:259px;font-size:17.4px;letter-spacing:-1px">%</span>
<span class="t tb" style="left:551.5px;top:258px;font-size:17.4px;letter-spacing:-0.4px">.0</span>
<svg class="i" style="left:563px;top:274.4px" width="12" height="7" viewBox="0 0 12 7"><path fill="#5f6368" d="M4 0L0 3.5 4 7V4.5h8v-2H4z"/></svg>
<span class="t tb" style="left:591.5px;top:258px;font-size:17.4px;letter-spacing:-0.4px">.00</span>
<svg class="i" style="left:606.5px;top:274.4px" width="12" height="7" viewBox="0 0 12 7"><path fill="#5f6368" d="M8 0l4 3.5L8 7V4.5H0v-2h8z"/></svg>
<span class="t tb" style="left:630.5px;top:259px;font-size:17.4px;letter-spacing:-0.35px">123</span>
<svg class="i" style="left:662.25px;top:264.75px" width="10.5" height="5.5" viewBox="0 0 10 5"><path fill="#5f6368" d="M0 0h10L5 5z"/></svg>
<svg class="i" style="left:0;top:0" width="3038" height="1767"><rect x="686.4" y="253" width="1.2" height="27" fill="#dcdee1"/></svg>
<span class="t tb" style="left:711.25px;top:259px;font-size:17.4px;letter-spacing:-0.5px">Default (Ari…</span>
<svg class="i" style="left:824.75px;top:264.75px" width="10.5" height="5.5" viewBox="0 0 10 5"><path fill="#5f6368" d="M0 0h10L5 5z"/></svg>
<svg class="i" style="left:0;top:0" width="3038" height="1767"><rect x="847.65" y="253" width="1.2" height="27" fill="#dcdee1"/></svg>
<span class="t tb" style="left:873px;top:258px;font-size:17.4px;letter-spacing:-0.5px">10</span>
<svg class="i" style="left:931px;top:264.75px" width="10.5" height="5.5" viewBox="0 0 10 5"><path fill="#5f6368" d="M0 0h10L5 5z"/></svg>
<svg class="i" style="left:0;top:0" width="3038" height="1767"><rect x="953.9" y="253" width="1.2" height="27" fill="#dcdee1"/></svg>
<svg class="i" style="left:966.85px;top:253.95px" width="29.5" height="29.5" viewBox="0 0 24 24"><path fill="#5f6368" d="M15.6 10.79c.97-.67 1.65-1.77 1.65-2.79 0-2.26-1.75-4-4-4H7v14h7.04c2.09 0 3.71-1.7 3.71-3.79 0-1.52-.86-2.82-2.15-3.42zM10 6.5h3c.83 0 1.5.67 1.5 1.5s-.67 1.5-1.5 1.5h-3v-3zm3.5 9H10v-3h3.5c.83 0 1.5.67 1.5 1.5s-.67 1.5-1.5 1.5z"/></svg>
<svg class="i" style="left:1004.48px;top:253.9px" width="35.03" height="30.2" viewBox="0 0 24 24" preserveAspectRatio="none"><path fill="#5f6368" d="M10 4v3h2.21l-3.42 8H6v3h8v-3h-2.21l3.42-8H18V4z"/></svg>
<svg class="i" style="left:1048.98px;top:255.95px" width="26.04" height="27.7" viewBox="0 0 24 24" preserveAspectRatio="none"><path fill="#5f6368" d="M7.24 8.75c-.26-.48-.39-1.03-.39-1.67 0-.61.13-1.16.4-1.67.26-.5.63-.93 1.11-1.29.48-.35 1.05-.63 1.7-.83.66-.19 1.39-.29 2.18-.29.81 0 1.54.11 2.21.34.66.22 1.23.54 1.69.94.47.4.83.88 1.08 1.43.25.55.38 1.15.38 1.81h-3.01c0-.31-.05-.59-.15-.85-.09-.27-.24-.49-.44-.68-.2-.19-.45-.33-.75-.44-.3-.1-.66-.16-1.06-.16-.39 0-.74.04-1.03.13-.29.09-.53.21-.72.36-.19.16-.34.34-.44.55-.1.21-.15.43-.15.66 0 .48.25.88.74 1.21.38.25.77.48 1.41.7H7.39c-.05-.08-.11-.17-.15-.25zM21 12v-2H3v2h9.62c.18.07.4.14.55.2.37.17.66.34.87.51.21.17.35.36.43.57.07.2.11.43.11.69 0 .23-.05.45-.14.66-.09.2-.23.38-.42.53-.19.15-.42.26-.71.35-.29.08-.63.13-1.01.13-.43 0-.83-.04-1.18-.13s-.66-.23-.91-.42c-.25-.19-.45-.44-.59-.75-.14-.31-.25-.76-.25-1.21H6.4c0 .55.08 1.13.24 1.58.16.45.37.85.65 1.21.28.35.6.66.98.92.37.26.78.48 1.22.65.44.17.9.3 1.38.39.48.08.96.13 1.44.13.8 0 1.53-.09 2.18-.28s1.21-.45 1.67-.79c.46-.34.82-.77 1.07-1.27s.38-1.07.38-1.71c0-.6-.1-1.14-.31-1.61-.05-.11-.11-.23-.17-.33H21z"/></svg>
<svg class="i" style="left:1096px;top:255.8px" width="15" height="17" viewBox="0 0 14.25 17.5" preserveAspectRatio="none"><path fill="#5f6368" fill-rule="evenodd" d="M0 17.5L6 0H8.25L14.25 17.5H11.9L10.5 13.3H3.75L2.35 17.5zM4.4 11.3H9.85L7.125 3z"/></svg>
<div class="b" style="left:1090px;top:278.25px;width:28.25px;height:5px;background:#000;"></div>
<svg class="i" style="left:0;top:0" width="3038" height="1767"><rect x="1130.65" y="253" width="1.2" height="27" fill="#dcdee1"/></svg>
<svg class="i" style="left:1145.9px;top:253.8px" width="26" height="26" viewBox="0 0 24 24"><path fill="#5f6368" d="M16.56 8.94L7.62 0 6.21 1.41l2.38 2.38-5.15 5.15c-.59.59-.59 1.54 0 2.12l5.5 5.5c.29.29.68.44 1.06.44s.77-.15 1.06-.44l5.5-5.5c.59-.58.59-1.53 0-2.12zM5.21 10L10 5.21 14.79 10H5.21zM19 11.5s-2 2.17-2 3.5c0 1.1.9 2 2 2s2-.9 2-2c0-1.33-2-3.5-2-3.5z"/></svg>
<svg class="i" style="left:1189.83px;top:254.08px" width="25.84" height="25.84" viewBox="0 0 24 24"><path fill="#5f6368" d="M3 3v18h18V3H3zm8 16H5v-6h6v6zm0-8H5V5h6v6zm8 8h-6v-6h6v6zm0-8h-6V5h6v6z"/></svg>
<svg class="i" style="left:1234.5px;top:257.1px" width="23.2" height="20.3" viewBox="0 0 23.2 20.3"><g fill="#c3c5c8"><path d="M0 0H10.1V2.3H2.1V5.4H0zM23.2 0H13.1V2.3H21.1V5.4H23.2zM0 20.3H10.1V18H2.1V14.9H0zM23.2 20.3H13.1V18H21.1V14.9H23.2z"/><path d="M0.6 9.1H5.6V6.4L9.8 10.15L5.6 13.9V11.2H0.6zM22.6 9.1H17.6V6.4L13.4 10.15L17.6 13.9V11.2H22.6z"/></g></svg>
<svg class="i" style="left:1273px;top:264.75px" width="10.5" height="5.5" viewBox="0 0 10 5"><path fill="#c6c8ca" d="M0 0h10L5 5z"/></svg>
<svg class="i" style="left:0;top:0" width="3038" height="1767"><rect x="1297.4" y="253" width="1.2" height="27" fill="#dcdee1"/></svg>
<svg class="i" style="left:1314px;top:257px" width="20" height="20" viewBox="0 0 20 20"><g fill="#5f6368"><rect x="0" y="0.1" width="19.9" height="2.5"/><rect x="0" y="5.7" width="13.9" height="2.5"/><rect x="0" y="11.2" width="19.9" height="2.5"/><rect x="0" y="16.9" width="13.9" height="2.5"/></g></svg>
<svg class="i" style="left:1341.5px;top:264.75px" width="10.5" height="5.5" viewBox="0 0 10 5"><path fill="#5f6368" d="M0 0h10L5 5z"/></svg>
<svg class="i" style="left:1366.08px;top:254.08px" width="25.84" height="25.84" viewBox="0 0 24 24"><path fill="#5f6368" d="M16 13h-3V3h-2v10H8l4 4 4-4zM4 19v2h16v-2H4z"/></svg>
<svg class="i" style="left:1398.5px;top:264.75px" width="10.5" height="5.5" viewBox="0 0 10 5"><path fill="#5f6368" d="M0 0h10L5 5z"/></svg>
<svg class="i" style="left:1425px;top:257.5px" width="21" height="21" viewBox="0 0 21 21"><g fill="#5f6368"><rect x="0.6" y="0.5" width="2.7" height="19.4"/><rect x="10.4" y="0.5" width="2.7" height="4.5"/><rect x="10.4" y="14.5" width="2.7" height="5.4"/><path d="M6.5 8.9H15.5V6.2L20 10.2L15.5 14.3V11.5H6.5z"/></g></svg>
<svg class="i" style="left:1454px;top:264.75px" width="10.5" height="5.5" viewBox="0 0 10 5"><path fill="#5f6368" d="M0 0h10L5 5z"/></svg>
<svg class="i" style="left:1479px;top:255px" width="25" height="24" viewBox="0 0 25 24"><g fill="none" stroke="#5f6368" stroke-width="2.3" stroke-linejoin="miter"><path d="M6.1 14.6L2 2.1L13.9 6.9M4.5 9.7L9.2 5"/><path d="M7.9 20.6L21.6 6.9M15.8 6.4L22.3 6.1L22 12.6" stroke-width="2.5"/></g></svg>
<svg class="i" style="left:1509.75px;top:264.75px" width="10.5" height="5.5" viewBox="0 0 10 5"><path fill="#5f6368" d="M0 0h10L5 5z"/></svg>
<svg class="i" style="left:0;top:0" width="3038" height="1767"><rect x="1534.4" y="253" width="1.2" height="27" fill="#dcdee1"/></svg>
<svg class="i" style="left:1546.25px;top:252.2px" width="30" height="30" viewBox="0 0 24 24"><path fill="#5f6368" d="M3.9 12c0-1.71 1.39-3.1 3.1-3.1h4V7H7c-2.76 0-5 2.24-5 5s2.24 5 5 5h4v-1.9H7c-1.71 0-3.1-1.39-3.1-3.1zM8 13h8v-2H8v2zm9-6h-4v1.9h4c1.71 0 3.1 1.39 3.1 3.1s-1.39 3.1-3.1 3.1h-4V17h4c2.76 0 5-2.24 5-5s-2.24-5-5-5z"/></svg>
<svg class="i" style="left:1589.5px;top:255.45px" width="24.5" height="24.5" viewBox="0 0 24 24"><path fill="#5f6368" d="M20 2H4c-1.1 0-2 .9-2 2v18l4-4h14c1.1 0 2-.9 2-2V4c0-1.1-.9-2-2-2zm0 14H5.17L4 17.17V4h16v12zM11 5h2v4h4v2h-4v4h-2v-4H7V9h4z"/></svg>
<svg class="i" style="left:1627.6px;top:252.85px" width="29.3" height="29.3" viewBox="0 0 24 24"><path fill="#5f6368" d="M9 17H7v-7h2v7zm4 0h-2V7h2v10zm4 0h-2v-4h2v4zm2 2H5V5h14v14zm0-16H5c-1.1 0-2 .9-2 2v14c0 1.1.9 2 2 2h14c1.1 0 2-.9 2-2V5c0-1.1-.9-2-2-2z"/></svg>
<svg class="i" style="left:1673.4px;top:258.9px" width="20" height="17" viewBox="0 0 20 17"><path fill="#5f6368" fill-rule="evenodd" d="M0.3 0H19.7L11.5 9.6V16.7H8.5V9.6zM4.9 2.5H15.1L10 8.3z"/></svg>
<svg class="i" style="left:1709.75px;top:264.75px" width="10.5" height="5.5" viewBox="0 0 10 5"><path fill="#5f6368" d="M0 0h10L5 5z"/></svg>
<svg class="i" style="left:1739.3px;top:256.6px" width="16" height="21" viewBox="0 0 16 21"><path d="M15.1 1.8H2.6L10.6 10.3L2.6 18.9H15.1" fill="none" stroke="#5f6368" stroke-width="2.5" stroke-linejoin="miter"/></svg>
<svg class="i" style="left:1768.25px;top:267.2px" width="7" height="3.6" viewBox="0 0 10 5"><path fill="#5f6368" d="M0 0h10L5 5z"/></svg>
<svg class="i" style="left:2752.85px;top:175.55px" width="34.5" height="34.5" viewBox="0 0 24 24"><path fill="#5f6368" d="M16 6l2.29 2.29-4.88 4.88-4-4L2 16.59 3.41 18l6-6 4 4 6.3-6.29L22 12V6z"/></svg>
<svg class="i" style="left:2825.85px;top:175.2px" width="35.1" height="35.1" viewBox="0 0 24 24"><path fill="#5f6368" d="M21.99 4c0-1.1-.89-2-1.99-2H4c-1.1 0-2 .9-2 2v12c0 1.1.9 2 2 2h14l4 4-.01-18zM18 14H6v-2h12v2zm0-3H6V9h12v2zm0-3H6V6h12v2z"/></svg>
<div class="share" style="left:2885.75px;top:167px;width:126px;height:51.4px"></div>
<svg class="i" style="left:2904.45px;top:180px" width="21" height="26" viewBox="0 0 21 26"><circle cx="10.5" cy="4.2" r="4" fill="#fff"/><path fill="#fff" d="M10.5 10c-4 0-8 1.6-8 4.4V16h16v-1.6c0-2.8-4-4.4-8-4.4z"/><g fill="none" stroke="#fff" stroke-width="1.5"><path d="M8.6 18.4H5.4a3 3 0 0 0 0 6h3.2M12.4 18.4h3.2a3 3 0 0 1 0 6h-3.2M7 21.4h7"/></g></svg>
<span class="t sharetxt" style="left:2933.75px;top:183px;font-size:20.6px;">Share</span>
<svg class="i" style="left:2992.5px;top:250.8px" width="34" height="34" viewBox="0 0 24 24"><path fill="#5f6368" d="M12 8l-6 6 1.41 1.41L12 10.83l4.59 4.58L18 14z"/></svg>
<div class="b" style="left:142.5px;top:295.75px;width:2878px;height:1392.75px;background:#f3f3f3;"></div>
<svg class="i" style="left:0;top:0" width="3038" height="1767"><rect x="142.5" y="294.55" width="2892.5" height="1.3" fill="#d9dbde"/></svg>
<div class="b" style="left:206.25px;top:329px;width:2277.5px;height:1359.5px;background:#fff;"></div>
<div class="b" style="left:142.5px;top:295.75px;width:2341.25px;height:33.25px;background:#f8f9fa;"></div>
<div class="b" style="left:2339.5px;top:295.75px;width:144.25px;height:33.25px;background:#eaebed;background-image:radial-gradient(rgba(110,150,240,.33) 0.5px,transparent 0.8px);background-size:4.8px 4.8px"></div>
<span class="t c rh" style="left:310.38px;width:200px;top:304px;font-size:15.5px;">A</span>
<span class="t c rh" style="left:651.62px;width:200px;top:304px;font-size:15.5px;">B</span>
<span class="t c rh" style="left:868.75px;width:200px;top:304px;font-size:15.5px;">C</span>
<span class="t c rh" style="left:1043.38px;width:200px;top:304px;font-size:15.5px;">D</span>
<span class="t c rh" style="left:1201.88px;width:200px;top:304px;font-size:15.5px;">E</span>
<span class="t c rh" style="left:1374.12px;width:200px;top:304px;font-size:15.5px;">F</span>
<span class="t c rh" style="left:1580.88px;width:200px;top:304px;font-size:15.5px;">G</span>
<span class="t c rh" style="left:1751px;width:200px;top:304px;font-size:15.5px;">H</span>
<span class="t c rh" style="left:1894.25px;width:200px;top:304px;font-size:15.5px;">I</span>
<span class="t c rh" style="left:2031.25px;width:200px;top:304px;font-size:15.5px;">J</span>
<span class="t c rh" style="left:2168.12px;width:200px;top:304px;font-size:15.5px;">K</span>
<span class="t c rh" style="left:2311.62px;width:200px;top:304px;font-size:15.5px;color:#3c4043;-webkit-text-stroke:0.25px #3c4043">L</span>
<svg class="i" style="left:0;top:0" width="3038" height="1767"><rect x="613.7" y="295.75" width="1.6" height="33.25" fill="#c4c6c9"/><rect x="887.95" y="295.75" width="1.6" height="33.25" fill="#c4c6c9"/><rect x="1047.95" y="295.75" width="1.6" height="33.25" fill="#c4c6c9"/><rect x="1237.2" y="295.75" width="1.6" height="33.25" fill="#c4c6c9"/><rect x="1364.95" y="295.75" width="1.6" height="33.25" fill="#c4c6c9"/><rect x="1581.7" y="295.75" width="1.6" height="33.25" fill="#c4c6c9"/><rect x="1778.45" y="295.75" width="1.6" height="33.25" fill="#c4c6c9"/><rect x="1921.95" y="295.75" width="1.6" height="33.25" fill="#c4c6c9"/><rect x="2064.95" y="295.75" width="1.6" height="33.25" fill="#c4c6c9"/><rect x="2195.95" y="295.75" width="1.6" height="33.25" fill="#c4c6c9"/><rect x="2338.7" y="295.75" width="1.6" height="33.25" fill="#c4c6c9"/><rect x="2482.95" y="295.75" width="1.6" height="33.25" fill="#c4c6c9"/><rect x="206" y="327.9" width="2278.55" height="1.8" fill="#bdbfc3"/></svg>
<div class="b" style="left:142.5px;top:322.8px;width:64.1px;height:6.4px;background:#c1c1c1;"></div>
<div class="b" style="left:202.1px;top:295.75px;width:4.5px;height:33.45px;background:#c1c1c1;"></div>
<div class="b" style="left:142.5px;top:329.2px;width:62.7px;height:1359.3px;background:#f8f9fa;"></div>
<div class="b" style="left:206.7px;top:329.8px;width:2277.65px;height:29.5px;background:#5183ec;"></div>
<svg class="i" style="left:0;top:0" width="3038" height="1767"><rect x="142.5" y="358.17" width="62.5" height="1.45" fill="#c2c4c7"/><rect x="142.5" y="388.02" width="62.5" height="1.45" fill="#c2c4c7"/><rect x="206.25" y="388" width="2277.5" height="1.5" fill="#dedede"/><rect x="142.5" y="485.52" width="62.5" height="1.45" fill="#c2c4c7"/><rect x="206.25" y="485.5" width="2277.5" height="1.5" fill="#dedede"/><rect x="142.5" y="560.88" width="62.5" height="1.45" fill="#c2c4c7"/><rect x="206.25" y="560.85" width="2277.5" height="1.5" fill="#dedede"/><rect x="142.5" y="657.88" width="62.5" height="1.45" fill="#c2c4c7"/><rect x="206.25" y="657.85" width="2277.5" height="1.5" fill="#dedede"/><rect x="142.5" y="733.67" width="62.5" height="1.45" fill="#c2c4c7"/><rect x="206.25" y="733.65" width="2277.5" height="1.5" fill="#dedede"/><rect x="142.5" y="853.77" width="62.5" height="1.45" fill="#c2c4c7"/><rect x="206.25" y="853.75" width="2277.5" height="1.5" fill="#dedede"/><rect x="142.5" y="883.77" width="62.5" height="1.45" fill="#c2c4c7"/><rect x="206.25" y="883.75" width="2277.5" height="1.5" fill="#dedede"/><rect x="142.5" y="913.91" width="62.5" height="1.45" fill="#c2c4c7"/><rect x="206.25" y="913.88" width="2277.5" height="1.5" fill="#dedede"/><rect x="142.5" y="944.04" width="62.5" height="1.45" fill="#c2c4c7"/><rect x="206.25" y="944.02" width="2277.5" height="1.5" fill="#dedede"/><rect x="142.5" y="974.18" width="62.5" height="1.45" fill="#c2c4c7"/><rect x="206.25" y="974.15" width="2277.5" height="1.5" fill="#dedede"/><rect x="142.5" y="1004.31" width="62.5" height="1.45" fill="#c2c4c7"/><rect x="206.25" y="1004.29" width="2277.5" height="1.5" fill="#dedede"/><rect x="142.5" y="1034.45" width="62.5" height="1.45" fill="#c2c4c7"/><rect x="206.25" y="1034.42" width="2277.5" height="1.5" fill="#dedede"/><rect x="142.5" y="1064.59" width="62.5" height="1.45" fill="#c2c4c7"/><rect x="206.25" y="1064.56" width="2277.5" height="1.5" fill="#dedede"/><rect x="142.5" y="1094.72" width="62.5" height="1.45" fill="#c2c4c7"/><rect x="206.25" y="1094.69" width="2277.5" height="1.5" fill="#dedede"/><rect x="142.5" y="1124.86" width="62.5" height="1.45" fill="#c2c4c7"/><rect x="206.25" y="1124.83" width="2277.5" height="1.5" fill="#dedede"/><rect x="142.5" y="1154.99" width="62.5" height="1.45" fill="#c2c4c7"/><rect x="206.25" y="1154.97" width="2277.5" height="1.5" fill="#dedede"/><rect x="142.5" y="1185.12" width="62.5" height="1.45" fill="#c2c4c7"/><rect x="206.25" y="1185.1" width="2277.5" height="1.5" fill="#dedede"/><rect x="142.5" y="1215.26" width="62.5" height="1.45" fill="#c2c4c7"/><rect x="206.25" y="1215.24" width="2277.5" height="1.5" fill="#dedede"/><rect x="142.5" y="1245.39" width="62.5" height="1.45" fill="#c2c4c7"/><rect x="206.25" y="1245.37" width="2277.5" height="1.5" fill="#dedede"/><rect x="142.5" y="1275.53" width="62.5" height="1.45" fill="#c2c4c7"/><rect x="206.25" y="1275.51" width="2277.5" height="1.5" fill="#dedede"/><rect x="142.5" y="1305.67" width="62.5" height="1.45" fill="#c2c4c7"/><rect x="206.25" y="1305.64" width="2277.5" height="1.5" fill="#dedede"/><rect x="142.5" y="1335.8" width="62.5" height="1.45" fill="#c2c4c7"/><rect x="206.25" y="1335.78" width="2277.5" height="1.5" fill="#dedede"/><rect x="142.5" y="1365.94" width="62.5" height="1.45" fill="#c2c4c7"/><rect x="206.25" y="1365.91" width="2277.5" height="1.5" fill="#dedede"/><rect x="142.5" y="1396.07" width="62.5" height="1.45" fill="#c2c4c7"/><rect x="206.25" y="1396.05" width="2277.5" height="1.5" fill="#dedede"/><rect x="142.5" y="1426.21" width="62.5" height="1.45" fill="#c2c4c7"/><rect x="206.25" y="1426.18" width="2277.5" height="1.5" fill="#dedede"/><rect x="142.5" y="1456.34" width="62.5" height="1.45" fill="#c2c4c7"/><rect x="206.25" y="1456.32" width="2277.5" height="1.5" fill="#dedede"/><rect x="142.5" y="1486.48" width="62.5" height="1.45" fill="#c2c4c7"/><rect x="206.25" y="1486.45" width="2277.5" height="1.5" fill="#dedede"/><rect x="142.5" y="1516.61" width="62.5" height="1.45" fill="#c2c4c7"/><rect x="206.25" y="1516.59" width="2277.5" height="1.5" fill="#dedede"/><rect x="142.5" y="1546.75" width="62.5" height="1.45" fill="#c2c4c7"/><rect x="206.25" y="1546.72" width="2277.5" height="1.5" fill="#dedede"/><rect x="142.5" y="1576.88" width="62.5" height="1.45" fill="#c2c4c7"/><rect x="206.25" y="1576.86" width="2277.5" height="1.5" fill="#dedede"/><rect x="142.5" y="1607.02" width="62.5" height="1.45" fill="#c2c4c7"/><rect x="206.25" y="1606.99" width="2277.5" height="1.5" fill="#dedede"/><rect x="142.5" y="1637.15" width="62.5" height="1.45" fill="#c2c4c7"/><rect x="206.25" y="1637.12" width="2277.5" height="1.5" fill="#dedede"/><rect x="142.5" y="1667.29" width="62.5" height="1.45" fill="#c2c4c7"/><rect x="206.25" y="1667.26" width="2277.5" height="1.5" fill="#dedede"/><rect x="613.75" y="359.5" width="1.5" height="1329" fill="#dedede"/><rect x="613.8" y="330" width="1.4" height="29.3" fill="rgba(20,40,110,.16)"/><rect x="888" y="359.5" width="1.5" height="1329" fill="#dedede"/><rect x="888.05" y="330" width="1.4" height="29.3" fill="rgba(20,40,110,.16)"/><rect x="1048" y="359.5" width="1.5" height="1329" fill="#dedede"/><rect x="1048.05" y="330" width="1.4" height="29.3" fill="rgba(20,40,110,.16)"/><rect x="1237.25" y="359.5" width="1.5" height="1329" fill="#dedede"/><rect x="1237.3" y="330" width="1.4" height="29.3" fill="rgba(20,40,110,.16)"/><rect x="1365" y="359.5" width="1.5" height="1329" fill="#dedede"/><rect x="1365.05" y="330" width="1.4" height="29.3" fill="rgba(20,40,110,.16)"/><rect x="1581.75" y="359.5" width="1.5" height="1329" fill="#dedede"/><rect x="1581.8" y="330" width="1.4" height="29.3" fill="rgba(20,40,110,.16)"/><rect x="1778.5" y="359.5" width="1.5" height="1329" fill="#dedede"/><rect x="1778.55" y="330" width="1.4" height="29.3" fill="rgba(20,40,110,.16)"/><rect x="1922" y="359.5" width="1.5" height="1329" fill="#dedede"/><rect x="1922.05" y="330" width="1.4" height="29.3" fill="rgba(20,40,110,.16)"/><rect x="2065" y="359.5" width="1.5" height="1329" fill="#dedede"/><rect x="2065.05" y="330" width="1.4" height="29.3" fill="rgba(20,40,110,.16)"/><rect x="2196" y="359.5" width="1.5" height="1329" fill="#dedede"/><rect x="2196.05" y="330" width="1.4" height="29.3" fill="rgba(20,40,110,.16)"/><rect x="2338.75" y="359.5" width="1.5" height="1329" fill="#dedede"/><rect x="2338.8" y="330" width="1.4" height="29.3" fill="rgba(20,40,110,.16)"/><rect x="2483" y="359.5" width="1.5" height="1329" fill="#dedede"/><rect x="2483.05" y="330" width="1.4" height="29.3" fill="rgba(20,40,110,.16)"/><rect x="204.8" y="329" width="1.6" height="1374.5" fill="#c4c6c9"/></svg>
<span class="t c rh" style="left:142.5px;width:62px;top:336px;font-size:15.5px">1</span>
<span class="t c rh" style="left:142.5px;width:62px;top:366px;font-size:15.5px">2</span>
<span class="t c rh" style="left:142.5px;width:62px;top:429px;font-size:15.5px">3</span>
<span class="t c rh" style="left:142.5px;width:62px;top:516px;font-size:15.5px">4</span>
<span class="t c rh" style="left:142.5px;width:62px;top:602px;font-size:15.5px">5</span>
<span class="t c rh" style="left:142.5px;width:62px;top:688px;font-size:15.5px">6</span>
<span class="t c rh" style="left:142.5px;width:62px;top:786px;font-size:15.5px">7</span>
<span class="t c rh" style="left:142.5px;width:62px;top:861px;font-size:15.5px">8</span>
<span class="t c rh" style="left:142.5px;width:62px;top:891px;font-size:15.5px">9</span>
<span class="t c rh" style="left:142.5px;width:62px;top:922px;font-size:15.5px">10</span>
<span class="t c rh" style="left:142.5px;width:62px;top:952px;font-size:15.5px">11</span>
<span class="t c rh" style="left:142.5px;width:62px;top:982px;font-size:15.5px">12</span>
<span class="t c rh" style="left:142.5px;width:62px;top:1012px;font-size:15.5px">13</span>
<span class="t c rh" style="left:142.5px;width:62px;top:1042px;font-size:15.5px">14</span>
<span class="t c rh" style="left:142.5px;width:62px;top:1072px;font-size:15.5px">15</span>
<span class="t c rh" style="left:142.5px;width:62px;top:1102px;font-size:15.5px">16</span>
<span class="t c rh" style="left:142.5px;width:62px;top:1133px;font-size:15.5px">17</span>
<span class="t c rh" style="left:142.5px;width:62px;top:1163px;font-size:15.5px">18</span>
<span class="t c rh" style="left:142.5px;width:62px;top:1193px;font-size:15.5px">19</span>
<span class="t c rh" style="left:142.5px;width:62px;top:1223px;font-size:15.5px">20</span>
<span class="t c rh" style="left:142.5px;width:62px;top:1253px;font-size:15.5px">21</span>
<span class="t c rh" style="left:142.5px;width:62px;top:1283px;font-size:15.5px">22</span>
<span class="t c rh" style="left:142.5px;width:62px;top:1313px;font-size:15.5px">23</span>
<span class="t c rh" style="left:142.5px;width:62px;top:1343px;font-size:15.5px">24</span>
<span class="t c rh" style="left:142.5px;width:62px;top:1374px;font-size:15.5px">25</span>
<span class="t c rh" style="left:142.5px;width:62px;top:1404px;font-size:15.5px">26</span>
<span class="t c rh" style="left:142.5px;width:62px;top:1434px;font-size:15.5px">27</span>
<span class="t c rh" style="left:142.5px;width:62px;top:1464px;font-size:15.5px">28</span>
<span class="t c rh" style="left:142.5px;width:62px;top:1494px;font-size:15.5px">29</span>
<span class="t c rh" style="left:142.5px;width:62px;top:1524px;font-size:15.5px">30</span>
<span class="t c rh" style="left:142.5px;width:62px;top:1554px;font-size:15.5px">31</span>
<span class="t c rh" style="left:142.5px;width:62px;top:1585px;font-size:15.5px">32</span>
<span class="t c rh" style="left:142.5px;width:62px;top:1615px;font-size:15.5px">33</span>
<span class="t c rh" style="left:142.5px;width:62px;top:1645px;font-size:15.5px">34</span>
<span class="t c rh" style="left:142.5px;width:62px;top:1675px;font-size:15.5px">35</span>
<span class="t cell wh" style="left:211.55px;top:337px;font-size:18.8px;">Title / Topic</span>
<span class="t cell wh" style="left:619.8px;top:337px;font-size:18.8px;">Notes</span>
<span class="t cell wh" style="left:894.05px;top:337px;font-size:18.8px;">Content Type</span>
<span class="t cell wh" style="left:1054.05px;top:337px;font-size:18.8px;">Topic Cluster</span>
<span class="t cell wh" style="left:1243.3px;top:337px;font-size:18.8px;">Funnel Stage</span>
<span class="t cell wh" style="left:1371.05px;top:337px;font-size:18.8px;">Value Prop Pillar</span>
<span class="t cell wh" style="left:1587.8px;top:337px;font-size:18.8px;">Call to Action</span>
<span class="t cell wh" style="left:1784.55px;top:337px;font-size:18.8px;">Author</span>
<span class="t cell wh" style="left:1928.05px;top:337px;font-size:18.8px;">Status</span>
<span class="t cell wh" style="left:2071.05px;top:337px;font-size:18.8px;">Link</span>
<span class="t cell wh" style="left:2202.05px;top:337px;font-size:18.8px;">Due Date</span>
<span class="t cell wh" style="left:2344.8px;top:337px;font-size:18.8px;">Publish Date</span>
<span class="t cell" style="left:211.55px;top:367px;font-size:18.8px;width:402.25px;overflow:hidden">How to write an effective marketing blog</span>
<span class="t cell" style="left:620.3px;top:367px;font-size:18.8px;">Steps to write a blog</span>
<span class="t cell" style="left:894.25px;top:367px;font-size:18.8px;width:153.5px;overflow:hidden">Blog</span>
<span class="t cell" style="left:1054.35px;top:367px;font-size:18.8px;">Content Marketing</span>
<svg class="i" style="left:1218.5px;top:372.35px" width="10.4" height="5.6" viewBox="0 0 10 5"><path fill="#868686" d="M0 0h10L5 5z"/></svg>
<span class="t cell" style="left:1243.6px;top:367px;font-size:18.8px;">Subscriber</span>
<svg class="i" style="left:1346.25px;top:372.35px" width="10.4" height="5.6" viewBox="0 0 10 5"><path fill="#868686" d="M0 0h10L5 5z"/></svg>
<span class="t cell" style="left:1371.35px;top:367px;font-size:18.8px;">Inboud Marketing</span>
<svg class="i" style="left:1563px;top:372.35px" width="10.4" height="5.6" viewBox="0 0 10 5"><path fill="#868686" d="M0 0h10L5 5z"/></svg>
<span class="t cell" style="left:1588.1px;top:367px;font-size:18.8px;">Download File</span>
<svg class="i" style="left:1759.75px;top:372.35px" width="10.4" height="5.6" viewBox="0 0 10 5"><path fill="#868686" d="M0 0h10L5 5z"/></svg>
<span class="t cell" style="left:1784.85px;top:367px;font-size:18.8px;">Alex</span>
<span class="t cell" style="left:1928.35px;top:367px;font-size:18.8px;">Posted</span>
<span class="t cell" style="right:702.1px;top:367px;font-size:18.8px;">April 25</span>
<span class="t cell" style="right:557.85px;top:367px;font-size:18.8px;">May 1</span>
<span class="t cell" style="left:211.55px;top:464px;font-size:18.8px;width:402.25px;overflow:hidden">AmazingCompany's Testimonial</span>
<span class="t cell" style="left:620.3px;top:396px;font-size:18.8px;">Write a case study about how</span>
<span class="t cell" style="left:620.3px;top:419px;font-size:18.8px;">we've helped</span>
<span class="t cell" style="left:620.3px;top:441px;font-size:18.8px;">AmazingCompany with their</span>
<span class="t cell" style="left:620.3px;top:464px;font-size:18.8px;">outreach campaign</span>
<span class="t cell" style="left:894.25px;top:464px;font-size:18.8px;width:153.5px;overflow:hidden">Case Study</span>
<span class="t cell" style="left:1054.35px;top:464px;font-size:18.8px;">Content Marketing</span>
<svg class="i" style="left:1218.5px;top:468.65px" width="10.4" height="5.6" viewBox="0 0 10 5"><path fill="#868686" d="M0 0h10L5 5z"/></svg>
<span class="t cell" style="left:1243.6px;top:464px;font-size:18.8px;">MQL</span>
<svg class="i" style="left:1346.25px;top:468.65px" width="10.4" height="5.6" viewBox="0 0 10 5"><path fill="#868686" d="M0 0h10L5 5z"/></svg>
<span class="t cell" style="left:1371.35px;top:464px;font-size:18.8px;">Outbound Marketing</span>
<svg class="i" style="left:1563px;top:468.65px" width="10.4" height="5.6" viewBox="0 0 10 5"><path fill="#868686" d="M0 0h10L5 5z"/></svg>
<span class="t cell" style="left:1588.1px;top:464px;font-size:18.8px;">Click on link/button</span>
<svg class="i" style="left:1759.75px;top:468.65px" width="10.4" height="5.6" viewBox="0 0 10 5"><path fill="#868686" d="M0 0h10L5 5z"/></svg>
<span class="t cell" style="left:1784.85px;top:464px;font-size:18.8px;">Mike</span>
<span class="t cell" style="left:1928.35px;top:464px;font-size:18.8px;">Drafted</span>
<span class="t cell" style="right:702.1px;top:464px;font-size:18.8px;">April 26</span>
<span class="t cell" style="right:557.85px;top:464px;font-size:18.8px;">May 2</span>
<span class="t cell" style="left:211.55px;top:540px;font-size:18.8px;width:402.25px;overflow:hidden">Why VOC is key to the success of your company</span>
<span class="t cell" style="left:620.3px;top:495px;font-size:18.8px;">-VOC what does this mean?</span>
<span class="t cell" style="left:620.3px;top:517px;font-size:18.8px;">-Why it is important</span>
<span class="t cell" style="left:620.3px;top:540px;font-size:18.8px;">-How to begin getting them</span>
<span class="t cell" style="left:894.25px;top:540px;font-size:18.8px;width:153.5px;overflow:hidden">Blog</span>
<span class="t cell" style="left:1054.35px;top:540px;font-size:18.8px;">Content Marketing</span>
<svg class="i" style="left:1218.5px;top:544.7px" width="10.4" height="5.6" viewBox="0 0 10 5"><path fill="#868686" d="M0 0h10L5 5z"/></svg>
<span class="t cell" style="left:1243.6px;top:540px;font-size:18.8px;">Subscriber</span>
<svg class="i" style="left:1346.25px;top:544.7px" width="10.4" height="5.6" viewBox="0 0 10 5"><path fill="#868686" d="M0 0h10L5 5z"/></svg>
<span class="t cell" style="left:1371.35px;top:540px;font-size:18.8px;">Inboud Marketing</span>
<svg class="i" style="left:1563px;top:544.7px" width="10.4" height="5.6" viewBox="0 0 10 5"><path fill="#868686" d="M0 0h10L5 5z"/></svg>
<span class="t cell" style="left:1588.1px;top:540px;font-size:18.8px;">Fill Form</span>
<svg class="i" style="left:1759.75px;top:544.7px" width="10.4" height="5.6" viewBox="0 0 10 5"><path fill="#868686" d="M0 0h10L5 5z"/></svg>
<span class="t cell" style="left:1784.85px;top:540px;font-size:18.8px;">Brian</span>
<span class="t cell" style="left:1928.35px;top:540px;font-size:18.8px;">Review</span>
<span class="t cell" style="right:702.1px;top:540px;font-size:18.8px;">April 27</span>
<span class="t cell" style="right:557.85px;top:540px;font-size:18.8px;">May 3</span>
<span class="t cell" style="left:211.55px;top:637px;font-size:18.8px;width:402.25px;overflow:hidden">How to find the right vendors for design</span>
<span class="t cell" style="left:620.3px;top:569px;font-size:18.8px;">-Good traits of the right Vendor</span>
<span class="t cell" style="left:620.3px;top:591px;font-size:18.8px;">-Bad traits of the vendor</span>
<span class="t cell" style="left:620.3px;top:614px;font-size:18.8px;">-Needs of your company</span>
<span class="t cell" style="left:620.3px;top:637px;font-size:18.8px;">-Getting aligned with the Vendor</span>
<span class="t cell" style="left:894.25px;top:637px;font-size:18.8px;width:153.5px;overflow:hidden">Video</span>
<span class="t cell" style="left:1054.35px;top:637px;font-size:18.8px;">HR &amp; Hiring</span>
<svg class="i" style="left:1218.5px;top:641.5px" width="10.4" height="5.6" viewBox="0 0 10 5"><path fill="#868686" d="M0 0h10L5 5z"/></svg>
<span class="t cell" style="left:1243.6px;top:637px;font-size:18.8px;">Subscriber</span>
<svg class="i" style="left:1346.25px;top:641.5px" width="10.4" height="5.6" viewBox="0 0 10 5"><path fill="#868686" d="M0 0h10L5 5z"/></svg>
<span class="t cell" style="left:1371.35px;top:637px;font-size:18.8px;">Inboud Marketing</span>
<svg class="i" style="left:1563px;top:641.5px" width="10.4" height="5.6" viewBox="0 0 10 5"><path fill="#868686" d="M0 0h10L5 5z"/></svg>
<span class="t cell" style="left:1588.1px;top:637px;font-size:18.8px;">Fill Form</span>
<svg class="i" style="left:1759.75px;top:641.5px" width="10.4" height="5.6" viewBox="0 0 10 5"><path fill="#868686" d="M0 0h10L5 5z"/></svg>
<span class="t cell" style="left:1784.85px;top:637px;font-size:18.8px;">Stijn</span>
<span class="t cell" style="left:1928.35px;top:637px;font-size:18.8px;">Planned</span>
<span class="t cell" style="right:702.1px;top:637px;font-size:18.8px;">April 28</span>
<span class="t cell" style="right:557.85px;top:637px;font-size:18.8px;">May 4</span>
<span class="t cell" style="left:211.55px;top:712px;font-size:18.8px;width:402.25px;overflow:hidden">What are OKRs and why you need them</span>
<span class="t cell" style="left:620.3px;top:667px;font-size:18.8px;">-Intro about what are OKRs</span>
<span class="t cell" style="left:620.3px;top:690px;font-size:18.8px;">-Why they are important</span>
<span class="t cell" style="left:620.3px;top:712px;font-size:18.8px;">-How to set up your first OKRs</span>
<span class="t cell" style="left:894.25px;top:712px;font-size:18.8px;width:153.5px;overflow:hidden">Blog</span>
<span class="t cell" style="left:1054.35px;top:712px;font-size:18.8px;">Team Building</span>
<svg class="i" style="left:1218.5px;top:717.2px" width="10.4" height="5.6" viewBox="0 0 10 5"><path fill="#868686" d="M0 0h10L5 5z"/></svg>
<span class="t cell" style="left:1243.6px;top:712px;font-size:18.8px;">Subscriber</span>
<svg class="i" style="left:1346.25px;top:717.2px" width="10.4" height="5.6" viewBox="0 0 10 5"><path fill="#868686" d="M0 0h10L5 5z"/></svg>
<span class="t cell" style="left:1371.35px;top:712px;font-size:18.8px;">Marketing Leadership</span>
<svg class="i" style="left:1563px;top:717.2px" width="10.4" height="5.6" viewBox="0 0 10 5"><path fill="#868686" d="M0 0h10L5 5z"/></svg>
<span class="t cell" style="left:1588.1px;top:712px;font-size:18.8px;">Provide Comments</span>
<svg class="i" style="left:1759.75px;top:717.2px" width="10.4" height="5.6" viewBox="0 0 10 5"><path fill="#868686" d="M0 0h10L5 5z"/></svg>
<span class="t cell" style="left:1784.85px;top:712px;font-size:18.8px;">Alex</span>
<span class="t cell" style="left:1928.35px;top:712px;font-size:18.8px;">Drafted</span>
<span class="t cell" style="right:702.1px;top:712px;font-size:18.8px;">April 29</span>
<span class="t cell" style="right:557.85px;top:712px;font-size:18.8px;">May 5</span>
<span class="t cell" style="left:211.55px;top:832px;font-size:18.8px;width:402.25px;overflow:hidden">How to create your first marketing video</span>
<span class="t cell" style="left:620.3px;top:741px;font-size:18.8px;">-Following trends</span>
<span class="t cell" style="left:620.3px;top:764px;font-size:18.8px;">-Create spreadsheet bank</span>
<span class="t cell" style="left:620.3px;top:786px;font-size:18.8px;">-Filter the ideas</span>
<span class="t cell" style="left:620.3px;top:809px;font-size:18.8px;">-Storyboard</span>
<span class="t cell" style="left:620.3px;top:832px;font-size:18.8px;">-Choosing Media type</span>
<span class="t cell" style="left:894.25px;top:832px;font-size:18.8px;width:153.5px;overflow:hidden">Blog</span>
<span class="t cell" style="left:1054.35px;top:832px;font-size:18.8px;">Content Marketing</span>
<svg class="i" style="left:1218.5px;top:836.6px" width="10.4" height="5.6" viewBox="0 0 10 5"><path fill="#868686" d="M0 0h10L5 5z"/></svg>
<span class="t cell" style="left:1243.6px;top:832px;font-size:18.8px;">Subscriber</span>
<svg class="i" style="left:1346.25px;top:836.6px" width="10.4" height="5.6" viewBox="0 0 10 5"><path fill="#868686" d="M0 0h10L5 5z"/></svg>
<span class="t cell" style="left:1371.35px;top:832px;font-size:18.8px;">Inboud Marketing</span>
<svg class="i" style="left:1563px;top:836.6px" width="10.4" height="5.6" viewBox="0 0 10 5"><path fill="#868686" d="M0 0h10L5 5z"/></svg>
<span class="t cell" style="left:1588.1px;top:832px;font-size:18.8px;">Click on link/button</span>
<svg class="i" style="left:1759.75px;top:836.6px" width="10.4" height="5.6" viewBox="0 0 10 5"><path fill="#868686" d="M0 0h10L5 5z"/></svg>
<span class="t cell" style="left:1784.85px;top:832px;font-size:18.8px;">Mike</span>
<span class="t cell" style="left:1928.35px;top:832px;font-size:18.8px;">Planned</span>
<span class="t cell" style="right:702.1px;top:832px;font-size:18.8px;">April 30</span>
<span class="t cell" style="right:557.85px;top:832px;font-size:18.8px;">May 6</span>
<span class="t cell" style="left:211.55px;top:863px;font-size:18.8px;width:402.25px;overflow:hidden">New brand announcement</span>
<span class="t cell" style="left:620.3px;top:863px;font-size:18.8px;">Announcing our new brand!</span>
<span class="t cell" style="left:894.25px;top:863px;font-size:18.8px;width:153.5px;overflow:hidden">Newsletter / Email</span>
<span class="t cell" style="left:1054.35px;top:863px;font-size:18.8px;">Content Marketing</span>
<svg class="i" style="left:1218.5px;top:867.9px" width="10.4" height="5.6" viewBox="0 0 10 5"><path fill="#868686" d="M0 0h10L5 5z"/></svg>
<span class="t cell" style="left:1243.6px;top:863px;font-size:18.8px;">MQL</span>
<svg class="i" style="left:1346.25px;top:867.9px" width="10.4" height="5.6" viewBox="0 0 10 5"><path fill="#868686" d="M0 0h10L5 5z"/></svg>
<span class="t cell" style="left:1371.35px;top:863px;font-size:18.8px;">Inboud Marketing</span>
<svg class="i" style="left:1563px;top:867.9px" width="10.4" height="5.6" viewBox="0 0 10 5"><path fill="#868686" d="M0 0h10L5 5z"/></svg>
<span class="t cell" style="left:1588.1px;top:863px;font-size:18.8px;">Download File</span>
<svg class="i" style="left:1759.75px;top:867.9px" width="10.4" height="5.6" viewBox="0 0 10 5"><path fill="#868686" d="M0 0h10L5 5z"/></svg>
<span class="t cell" style="left:1784.85px;top:863px;font-size:18.8px;">Brian</span>
<span class="t cell" style="left:1928.35px;top:863px;font-size:18.8px;">Planned</span>
<span class="t cell" style="right:702.1px;top:863px;font-size:18.8px;">May 1</span>
<span class="t cell" style="right:557.85px;top:863px;font-size:18.8px;">May 7</span>
<div class="b" style="left:3020.5px;top:295.75px;width:14.5px;height:1392.75px;background:#fff;"></div>
<svg class="i" style="left:0;top:0" width="3038" height="1767"><rect x="3020" y="328.5" width="1.2" height="1360" fill="#dcdcdc"/></svg>
<div class="b" style="left:3020px;top:295.75px;width:15px;height:32.45px;background:#f4f4f4;"></div>
<svg class="i" style="left:0;top:0" width="3038" height="1767"><rect x="3020" y="328" width="15" height="1.2" fill="#dcdcdc"/></svg>
<div class="b" style="left:3022.5px;top:331px;width:10.6px;height:54.5px;background:#dadce0;border-radius:5.5px"></div>
<div class="b" style="left:3021.2px;top:1644.5px;width:13.8px;height:43.3px;background:#f8f8f8;"></div>
<svg class="i" style="left:0;top:0" width="3038" height="1767"><rect x="3021" y="1643.9" width="14" height="1.2" fill="#dcdcdc"/><rect x="3021" y="1664.4" width="14" height="1.2" fill="#dcdcdc"/></svg>
<svg class="i" style="left:3025.7px;top:1652.2px" width="7.4" height="4.6" viewBox="0 0 10 5"><path fill="#8a8a8a" d="M0 5h10L5 0z"/></svg>
<svg class="i" style="left:3025.7px;top:1674.3px" width="7.4" height="4.6" viewBox="0 0 10 5"><path fill="#8a8a8a" d="M0 0h10L5 5z"/></svg>
<div class="b" style="left:142.5px;top:1688.5px;width:2892.5px;height:15.3px;background:#fff;"></div>
<div class="b" style="left:142.5px;top:1688.5px;width:62.7px;height:15.3px;background:#f1f2f3;"></div>
<svg class="i" style="left:0;top:0" width="3038" height="1767"><rect x="142.5" y="1687.85" width="2892.5" height="1.3" fill="#d9d9d9"/></svg>
<div class="b" style="left:2976.6px;top:1689.1px;width:43.8px;height:14.5px;background:#f8f8f8;"></div>
<div class="b" style="left:3020.4px;top:1689.1px;width:14.6px;height:14.5px;background:#f1f1f1;"></div>
<svg class="i" style="left:0;top:0" width="3038" height="1767"><rect x="2976" y="1688.5" width="1.2" height="15.1" fill="#dcdcdc"/><rect x="2996.8" y="1688.5" width="1.2" height="15.1" fill="#dcdcdc"/><rect x="3019.8" y="1688.5" width="1.2" height="15.1" fill="#dcdcdc"/></svg>
<svg class="i" style="left:2984.5px;top:1693.1px" width="4.6" height="7.4" viewBox="0 0 5 10"><path fill="#8a8a8a" d="M5 0v10L0 5z"/></svg>
<svg class="i" style="left:3006.6px;top:1693.1px" width="4.6" height="7.4" viewBox="0 0 5 10"><path fill="#8a8a8a" d="M0 0v10L5 5z"/></svg>
<div class="b" style="left:142.5px;top:1703.8px;width:2892.5px;height:54.2px;background:#f1f3f4;"></div>
<svg class="i" style="left:0;top:0" width="3038" height="1767"><rect x="142.5" y="1703.2" width="2892.5" height="1.2" fill="#e3e4e6"/></svg>
<svg class="i" style="left:213.35px;top:1723.1px" width="14.8" height="14.8" viewBox="0 0 14.8 14.8"><path fill="#5f6368" d="M5.95 0H8.85V5.95H14.8V8.85H8.85V14.8H5.95V8.85H0V5.95H5.95z"/></svg>
<svg class="i" style="left:256.55px;top:1722.9px" width="17.5" height="16.4" viewBox="0 0 17.5 16.4"><path fill="#5f6368" d="M0 0H17.5V2.5H0zM0 4.6H17.5V7.1H0zM0 9.2H17.5V11.7H0zM0 13.8H17.5V16.3H0z"/></svg>
<div class="b" style="left:308px;top:1703.2px;width:243.2px;height:54.8px;background:#fff;box-shadow:-1.5px 0 2px -1px rgba(60,64,67,.35),1.5px 0 2px -1px rgba(60,64,67,.35)"></div>
<span class="t tab act" style="left:332.2px;top:1721px;font-size:21px;letter-spacing:0.33px">Content Calendar</span>
<svg class="i" style="left:516.25px;top:1728px" width="11.5" height="6" viewBox="0 0 10 5"><path fill="#2e7d3e" d="M0 0h10L5 5z"/></svg>
<span class="t tab" style="left:575.7px;top:1721px;font-size:21px;letter-spacing:0.1px">Reference Table</span>
<svg class="i" style="left:743px;top:1728px" width="11.5" height="6" viewBox="0 0 10 5"><path fill="#777a7d" d="M0 0h10L5 5z"/></svg>
<svg class="i" style="left:0;top:0" width="3038" height="1767"><rect x="778.15" y="1704.5" width="1.2" height="53.5" fill="#e1e3e6"/></svg>
<span class="t tab" style="left:802.7px;top:1721px;font-size:21px;letter-spacing:0.24px">Content Bank</span>
<svg class="i" style="left:946.75px;top:1728px" width="11.5" height="6" viewBox="0 0 10 5"><path fill="#777a7d" d="M0 0h10L5 5z"/></svg>
<svg class="i" style="left:0;top:0" width="3038" height="1767"><rect x="980.15" y="1704.5" width="1.2" height="53.5" fill="#e1e3e6"/></svg>
<svg class="i" style="left:2979.8px;top:1716.4px" width="24.6" height="29" viewBox="0 0 24.6 29"><path fill="#5f6368" d="M3 0h18.6a3 3 0 0 1 3 3v19.4a3 3 0 0 1-3 3H15.6L12.3 29 9 25.4H3a3 3 0 0 1-3-3V3a3 3 0 0 1 3-3z"/><path fill="#fff" d="M12.3 4.6Q14.5 10.4 20.3 12.6Q14.5 14.8 12.3 20.6Q10.1 14.8 4.3 12.6Q10.1 10.4 12.3 4.6z"/></svg>
<svg class="i" style="left:142.5px;top:1748px" width="13.5" height="10" viewBox="0 0 13.5 10"><path d="M0 0Q0.5 10 13.5 10H0z" fill="#000"/></svg>
</div>
</body></html>
